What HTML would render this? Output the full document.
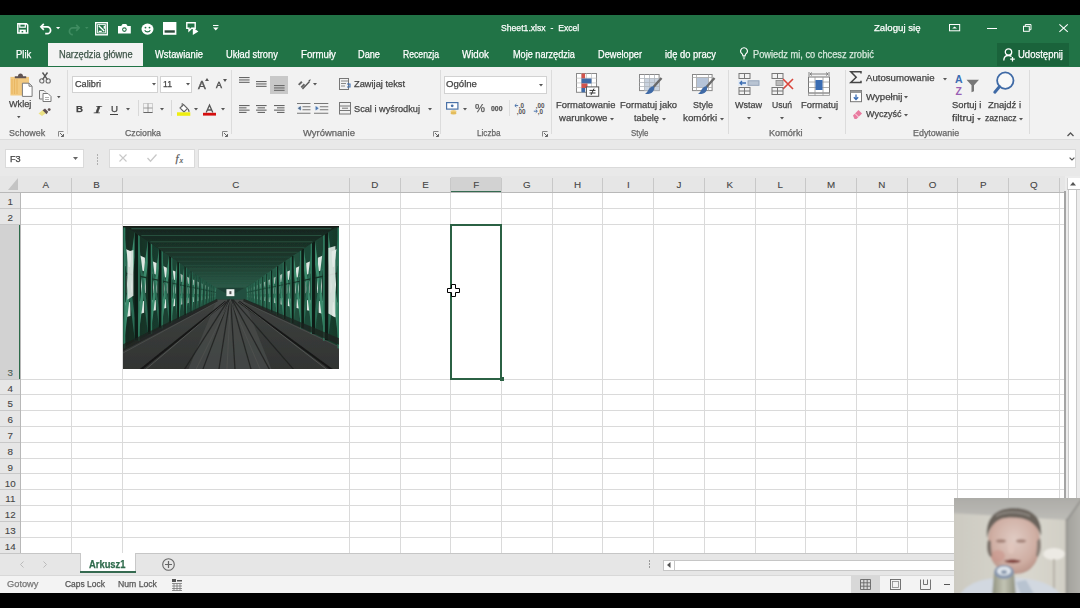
<!DOCTYPE html>
<html><head><meta charset="utf-8">
<style>
*{margin:0;padding:0;box-sizing:border-box}
html,body{width:1080px;height:608px;overflow:hidden;background:#000}
body{position:relative;font-family:"Liberation Sans",sans-serif}
.a{position:absolute;white-space:nowrap}
div.a{-webkit-text-stroke:0.25px currentColor}
svg.a{overflow:visible}
</style></head><body>
<div class="a" style="left:0.00px;top:0.00px;width:1080.00px;height:608.00px;background:#000"></div>
<div class="a" style="left:0.00px;top:15.00px;width:1080.00px;height:51.50px;background:#217346"></div>
<div class="a" style="left:0.00px;top:66.50px;width:1080.00px;height:72.50px;background:#f2f2f2"></div>
<div class="a" style="left:0.00px;top:139.00px;width:1080.00px;height:1.00px;background:#dcdcdc"></div>
<div class="a" style="left:0.00px;top:140.00px;width:1080.00px;height:36.00px;background:#e9e9e9"></div>
<svg class="a" style="left:17.00px;top:23.40px;" width="11.5" height="10.8" viewBox="0 0 11.5 10.8"><path d="M0.8 0.8h8.6l1.3 1.3v7.9H0.8z" fill="none" stroke="#fff" stroke-width="1.5"/><rect x="2.8" y="0.8" width="5.5" height="3.4" fill="none" stroke="#fff" stroke-width="1.2"/><rect x="2.6" y="6.6" width="6.2" height="3.6" fill="#fff"/><rect x="4.6" y="8" width="1.6" height="1.4" fill="#217346"/></svg>
<svg class="a" style="left:40.00px;top:23.00px;" width="12.5" height="11" viewBox="0 0 12.5 11"><path d="M3.8 0.8L0.9 3.8l2.9 3" fill="none" stroke="#fff" stroke-width="1.7"/><path d="M1.5 3.8H7.2a3.4 3.4 0 0 1 0 6.8H5.2" fill="none" stroke="#fff" stroke-width="1.7"/></svg>
<svg class="a" style="left:56.30px;top:27.00px;" width="4.2" height="2.2" viewBox="0 0 4.2 2.2"><path d="M0 0h4.2L2.1 2.2z" fill="#fff"/></svg>
<svg class="a" style="left:67.40px;top:23.90px;" width="13" height="9.5" viewBox="0 0 13 9.5"><path d="M9.2 0.8l2.9 3-2.9 3" fill="none" stroke="#3f8c61" stroke-width="1.7"/><path d="M11.5 3.8H5.8a3.4 3.4 0 0 0 0 6.8" fill="none" stroke="#3f8c61" stroke-width="1.7"/></svg>
<svg class="a" style="left:84.50px;top:27.00px;" width="3.5" height="2" viewBox="0 0 3.5 2"><path d="M0 0h3.5L1.75 2z" fill="#3f8c61"/></svg>
<svg class="a" style="left:95.20px;top:22.00px;" width="13" height="13.5" viewBox="0 0 13 13.5"><rect x="0.7" y="0.7" width="11.6" height="12.1" fill="none" stroke="#fff" stroke-width="1.4"/><rect x="2.6" y="2.6" width="7.8" height="8.3" fill="none" stroke="#fff" stroke-width="0.9"/><path d="M3.8 3.8l5.5 5.5M9.3 3.8v3M3.8 9.3h3" stroke="#fff" stroke-width="1.3"/></svg>
<svg class="a" style="left:117.80px;top:24.30px;" width="12.8" height="9.5" viewBox="0 0 12.8 9.5"><path d="M0 2h3.2l1.4-2h3.6l1.4 2h3.2v7.5H0z" fill="#fff"/><circle cx="6.4" cy="5.6" r="2.3" fill="#217346"/><circle cx="6.4" cy="5.6" r="1.2" fill="#fff"/></svg>
<svg class="a" style="left:140.60px;top:23.20px;" width="13" height="12.2" viewBox="0 0 13 12.2"><ellipse cx="6.5" cy="6.1" rx="6" ry="5.6" fill="#fff"/><circle cx="4.5" cy="4.6" r="0.9" fill="#217346"/><circle cx="8.5" cy="4.6" r="0.9" fill="#217346"/><path d="M3.7 7.2a3 2.6 0 0 0 5.6 0" fill="none" stroke="#217346" stroke-width="1.1"/></svg>
<svg class="a" style="left:163.30px;top:22.10px;" width="13.4" height="12.8" viewBox="0 0 13.4 12.8"><rect x="0" y="0" width="13.4" height="12.8" fill="#fff"/><rect x="1.6" y="8.3" width="10.2" height="2.4" fill="#2b4a3a"/></svg>
<svg class="a" style="left:186.00px;top:22.00px;" width="13" height="13" viewBox="0 0 13 13"><path d="M0.8 0.8h8.4v5.4H5.6L3 8.8V6.2H0.8z" fill="none" stroke="#fff" stroke-width="1.4"/><path d="M6.8 5.5l5.6 4-5.6 3.5z" fill="#fff"/></svg>
<svg class="a" style="left:212.80px;top:25.40px;" width="5.5" height="5.6" viewBox="0 0 5.5 5.6"><path d="M0 0.5h5.5" stroke="#fff" stroke-width="1"/><path d="M0 2.6h5.5L2.75 5.6z" fill="#fff"/></svg>
<div class="a" style="left:501.10px;top:22.70px;font-size:9.8px;line-height:9.8px;color:#ffffff;transform:scaleX(0.8820);transform-origin:0 0;">Sheet1.xlsx&nbsp; -&nbsp; Excel</div>
<div class="a" style="left:874.00px;top:22.70px;font-size:9.8px;line-height:9.8px;color:#ffffff;transform:scaleX(0.9811);transform-origin:0 0;">Zaloguj się</div>
<svg class="a" style="left:948.60px;top:24.20px;" width="11.2" height="7.3" viewBox="0 0 11.2 7.3"><rect x="0.5" y="0.5" width="10.2" height="6.3" fill="none" stroke="#fff" stroke-width="1"/><path d="M3.2 4.6l2.4-2.2 2.4 2.2z" fill="#fff"/></svg>
<div class="a" style="left:987.00px;top:27.60px;width:9.50px;height:1.10px;background:#fff"></div>
<svg class="a" style="left:1023.00px;top:24.00px;" width="8.5" height="7.8" viewBox="0 0 8.5 7.8"><rect x="0.5" y="2.3" width="5.8" height="5" fill="none" stroke="#fff" stroke-width="1"/><path d="M2.3 2.3V0.5h5.7v5.2H6.3" fill="none" stroke="#fff" stroke-width="1"/></svg>
<svg class="a" style="left:1058.60px;top:23.80px;" width="9.2" height="8.2" viewBox="0 0 9.2 8.2"><path d="M0.4 0.4l8.4 7.4M8.8 0.4L0.4 7.8" stroke="#fff" stroke-width="1.1"/></svg>
<div class="a" style="left:48.00px;top:42.80px;width:95.00px;height:23.70px;background:#f3f3f3"></div>
<div class="a" style="left:16.00px;top:50.37px;font-size:10.2px;line-height:10.2px;color:#ffffff;transform:scaleX(0.9309);transform-origin:0 0;">Plik</div>
<div class="a" style="left:59.00px;top:50.37px;font-size:10.2px;line-height:10.2px;color:#3e5548;transform:scaleX(0.9090);transform-origin:0 0;">Narzędzia główne</div>
<div class="a" style="left:155.00px;top:50.37px;font-size:10.2px;line-height:10.2px;color:#ffffff;transform:scaleX(0.9204);transform-origin:0 0;">Wstawianie</div>
<div class="a" style="left:226.00px;top:50.37px;font-size:10.2px;line-height:10.2px;color:#ffffff;transform:scaleX(0.9173);transform-origin:0 0;">Układ strony</div>
<div class="a" style="left:301.00px;top:50.37px;font-size:10.2px;line-height:10.2px;color:#ffffff;transform:scaleX(0.9501);transform-origin:0 0;">Formuły</div>
<div class="a" style="left:358.00px;top:50.37px;font-size:10.2px;line-height:10.2px;color:#ffffff;transform:scaleX(0.9022);transform-origin:0 0;">Dane</div>
<div class="a" style="left:403.00px;top:50.37px;font-size:10.2px;line-height:10.2px;color:#ffffff;transform:scaleX(0.8466);transform-origin:0 0;">Recenzja</div>
<div class="a" style="left:462.00px;top:50.37px;font-size:10.2px;line-height:10.2px;color:#ffffff;transform:scaleX(0.9527);transform-origin:0 0;">Widok</div>
<div class="a" style="left:513.00px;top:50.37px;font-size:10.2px;line-height:10.2px;color:#ffffff;transform:scaleX(0.8963);transform-origin:0 0;">Moje narzędzia</div>
<div class="a" style="left:598.00px;top:50.37px;font-size:10.2px;line-height:10.2px;color:#ffffff;transform:scaleX(0.9024);transform-origin:0 0;">Deweloper</div>
<div class="a" style="left:665.00px;top:50.37px;font-size:10.2px;line-height:10.2px;color:#ffffff;transform:scaleX(0.9178);transform-origin:0 0;">idę do pracy</div>
<svg class="a" style="left:740.00px;top:47.00px;" width="8" height="13" viewBox="0 0 8 13"><path d="M4 0.7a3.3 3.3 0 0 1 2 6c-0.6 0.5-0.8 1.2-0.8 2H2.8c0-0.8-0.2-1.5-0.8-2a3.3 3.3 0 0 1 2-6z" fill="none" stroke="#fff" stroke-width="1.1"/><path d="M2.8 10h2.4M3.2 11.8h1.6" stroke="#fff" stroke-width="1"/></svg>
<div class="a" style="left:753.00px;top:50.37px;font-size:10.2px;line-height:10.2px;color:#d6e8dc;transform:scaleX(0.9083);transform-origin:0 0;">Powiedz mi, co chcesz zrobić</div>
<div class="a" style="left:996.50px;top:42.50px;width:72.50px;height:23.00px;background:#1a633b"></div>
<svg class="a" style="left:1003.00px;top:48.00px;" width="13" height="13" viewBox="0 0 13 13"><circle cx="5.5" cy="4" r="3.2" fill="none" stroke="#fff" stroke-width="1.3"/><path d="M0.8 12.5c0-3 2-5 4.7-5 1.2 0 2.2 0.3 3 0.9" fill="none" stroke="#fff" stroke-width="1.3"/><path d="M9.5 9v4.5M7.2 11.2h4.6" stroke="#fff" stroke-width="1.2"/></svg>
<div class="a" style="left:1017.50px;top:50.37px;font-size:10.2px;line-height:10.2px;color:#ffffff;transform:scaleX(0.9337);transform-origin:0 0;">Udostępnij</div>
<div class="a" style="left:67.30px;top:70.00px;width:1.00px;height:64.00px;background:#dcdcdc"></div>
<div class="a" style="left:230.80px;top:70.00px;width:1.00px;height:64.00px;background:#dcdcdc"></div>
<div class="a" style="left:440.00px;top:70.00px;width:1.00px;height:64.00px;background:#dcdcdc"></div>
<div class="a" style="left:550.50px;top:70.00px;width:1.00px;height:64.00px;background:#dcdcdc"></div>
<div class="a" style="left:728.20px;top:70.00px;width:1.00px;height:64.00px;background:#dcdcdc"></div>
<div class="a" style="left:845.00px;top:70.00px;width:1.00px;height:64.00px;background:#dcdcdc"></div>
<div class="a" style="left:1028.80px;top:70.00px;width:1.00px;height:64.00px;background:#dcdcdc"></div>
<div class="a" style="left:8.80px;top:128.65px;font-size:8.8px;line-height:8.8px;color:#666666;transform:scaleX(1.0110);transform-origin:0 0;">Schowek</div>
<div class="a" style="left:125.00px;top:128.65px;font-size:8.8px;line-height:8.8px;color:#666666;transform:scaleX(0.9947);transform-origin:0 0;">Czcionka</div>
<div class="a" style="left:303.00px;top:128.65px;font-size:8.8px;line-height:8.8px;color:#666666;transform:scaleX(1.0757);transform-origin:0 0;">Wyrównanie</div>
<div class="a" style="left:476.80px;top:128.65px;font-size:8.8px;line-height:8.8px;color:#666666;transform:scaleX(0.9277);transform-origin:0 0;">Liczba</div>
<div class="a" style="left:630.80px;top:128.65px;font-size:8.8px;line-height:8.8px;color:#666666;transform:scaleX(0.8945);transform-origin:0 0;">Style</div>
<div class="a" style="left:769.40px;top:128.65px;font-size:8.8px;line-height:8.8px;color:#666666;transform:scaleX(1.0379);transform-origin:0 0;">Komórki</div>
<div class="a" style="left:913.30px;top:128.65px;font-size:8.8px;line-height:8.8px;color:#666666;transform:scaleX(1.0133);transform-origin:0 0;">Edytowanie</div>
<svg class="a" style="left:58.30px;top:130.80px;" width="6" height="6" viewBox="0 0 6 6"><path d="M0.5 5.5V0.5h5" fill="none" stroke="#888" stroke-width="1"/><path d="M2 2l3.5 3.5M5.5 3v2.5H3" fill="none" stroke="#666" stroke-width="1"/></svg>
<svg class="a" style="left:222.00px;top:130.80px;" width="6" height="6" viewBox="0 0 6 6"><path d="M0.5 5.5V0.5h5" fill="none" stroke="#888" stroke-width="1"/><path d="M2 2l3.5 3.5M5.5 3v2.5H3" fill="none" stroke="#666" stroke-width="1"/></svg>
<svg class="a" style="left:432.50px;top:130.80px;" width="6" height="6" viewBox="0 0 6 6"><path d="M0.5 5.5V0.5h5" fill="none" stroke="#888" stroke-width="1"/><path d="M2 2l3.5 3.5M5.5 3v2.5H3" fill="none" stroke="#666" stroke-width="1"/></svg>
<svg class="a" style="left:542.00px;top:130.80px;" width="6" height="6" viewBox="0 0 6 6"><path d="M0.5 5.5V0.5h5" fill="none" stroke="#888" stroke-width="1"/><path d="M2 2l3.5 3.5M5.5 3v2.5H3" fill="none" stroke="#666" stroke-width="1"/></svg>
<svg class="a" style="left:9.50px;top:72.50px;" width="23" height="24.5" viewBox="0 0 23 24.5"><rect x="0.4" y="3.9" width="18.6" height="18.6" fill="#f2c97f"/><path d="M2 6v15M4.5 6v15M7 6v15" stroke="#e9b763" stroke-width="1.2"/><path d="M4.8 5.3V3.2h3.2c0-1.8 1-2.8 2.5-2.8s2.5 1 2.5 2.8h3.2v2.1z" fill="#5f5353"/><path d="M12.4 10.2h6.7l3 3v10.2h-9.7z" fill="#fff" stroke="#7a7a7a" stroke-width="1"/><path d="M19 10.2v3h3" fill="none" stroke="#7a7a7a" stroke-width="1"/></svg>
<div class="a" style="left:8.70px;top:100.41px;font-size:9.2px;line-height:9.2px;color:#444444;transform:scaleX(0.9916);transform-origin:0 0;">Wklej</div>
<svg class="a" style="left:17.30px;top:116.00px;" width="3.6" height="2.2" viewBox="0 0 3.6 2.2"><path d="M0 0h3.6L1.8 2.2z" fill="#555"/></svg>
<svg class="a" style="left:39.20px;top:72.00px;" width="12" height="11.5" viewBox="0 0 12 11.5"><path d="M3.5 0.5l5 7.2M8.5 0.5l-5 7.2" stroke="#555" stroke-width="1.4"/><circle cx="2.8" cy="8.9" r="2.1" fill="none" stroke="#6a6a6a" stroke-width="1.1"/><circle cx="9.2" cy="8.9" r="2.1" fill="none" stroke="#6a6a6a" stroke-width="1.1"/></svg>
<svg class="a" style="left:38.70px;top:89.70px;" width="12.5" height="12" viewBox="0 0 12.5 12"><path d="M0.5 0.5h4.5l2 2M0.5 0.5v8.5h3" fill="none" stroke="#777" stroke-width="1"/><path d="M4 3.5h5l3 3v5h-8z" fill="#fff" stroke="#777" stroke-width="1"/><path d="M6 7.5h4M6 9.5h4" stroke="#999" stroke-width="0.8"/></svg>
<svg class="a" style="left:56.80px;top:95.60px;" width="3.6" height="2.2" viewBox="0 0 3.6 2.2"><path d="M0 0h3.6L1.8 2.2z" fill="#555"/></svg>
<svg class="a" style="left:38.30px;top:108.40px;" width="13" height="8.2" viewBox="0 0 13 8.2"><path d="M0.5 5.5L5 1.8l3.2 3.2L4 8z" fill="#ece286"/><path d="M4.6 2.2l2.4-1.6 3.2 3.2-1.6 2.4z" fill="#5f5050"/><circle cx="11.2" cy="1.6" r="1.4" fill="#5f5050"/></svg>
<div class="a" style="left:71.70px;top:76.00px;width:86.60px;height:17.00px;background:#fff;border:1px solid #d2d2d2"></div>
<div class="a" style="left:74.50px;top:80.21px;font-size:9.2px;line-height:9.2px;color:#444444;transform:scaleX(0.9972);transform-origin:0 0;">Calibri</div>
<svg class="a" style="left:151.50px;top:83.30px;" width="4" height="2.5" viewBox="0 0 4 2.5"><path d="M0 0h4L2 2.5z" fill="#555"/></svg>
<div class="a" style="left:159.70px;top:76.00px;width:32.80px;height:17.00px;background:#fff;border:1px solid #d2d2d2"></div>
<div class="a" style="left:162.50px;top:80.21px;font-size:9.2px;line-height:9.2px;color:#444444;transform:scaleX(0.9423);transform-origin:0 0;">11</div>
<svg class="a" style="left:185.50px;top:83.30px;" width="4" height="2.5" viewBox="0 0 4 2.5"><path d="M0 0h4L2 2.5z" fill="#555"/></svg>
<div class="a" style="left:198.20px;top:79.51px;font-size:10.5px;line-height:10.5px;color:#555;transform:scaleX(1.1137);transform-origin:0 0;-webkit-text-stroke:0.4px currentColor">A</div>
<svg class="a" style="left:205.00px;top:78.00px;" width="4" height="3" viewBox="0 0 4 3"><path d="M0 3l2-3 2 3z" fill="#555"/></svg>
<div class="a" style="left:216.40px;top:81.20px;font-size:8.5px;line-height:8.5px;color:#555;transform:scaleX(1.0406);transform-origin:0 0;-webkit-text-stroke:0.5px currentColor">A</div>
<svg class="a" style="left:223.00px;top:79.00px;" width="4" height="3" viewBox="0 0 4 3"><path d="M0 0h4L2 3z" fill="#555"/></svg>
<div class="a" style="left:75.50px;top:104.46px;font-size:9.5px;line-height:9.5px;color:#444;font-weight:bold;transform:scaleX(1.0203);transform-origin:0 0;">B</div>
<div class="a" style="left:93.50px;top:103.61px;font-size:10.5px;line-height:10.5px;color:#444;transform:scaleX(2.0569);transform-origin:0 0;"><i style="font-family:Liberation Serif">I</i></div>
<div class="a" style="left:110.50px;top:104.46px;font-size:9.5px;line-height:9.5px;color:#444;transform:scaleX(1.0203);transform-origin:0 0;">U</div>
<div class="a" style="left:110.30px;top:114.00px;width:7.50px;height:1.00px;background:#444"></div>
<svg class="a" style="left:125.50px;top:108.00px;" width="4" height="2.5" viewBox="0 0 4 2.5"><path d="M0 0h4L2 2.5z" fill="#555"/></svg>
<div class="a" style="left:137.50px;top:100.00px;width:1.00px;height:16.00px;background:#d8d8d8"></div>
<svg class="a" style="left:142.50px;top:103.00px;" width="10" height="10" viewBox="0 0 10 10"><rect x="0.5" y="0.5" width="9" height="9" fill="none" stroke="#aaa" stroke-width="1" stroke-dasharray="1 1"/><path d="M5 0.5v9M0.5 5h9" stroke="#888" stroke-width="0.8"/><path d="M0.5 9.5h9" stroke="#666" stroke-width="1"/></svg>
<svg class="a" style="left:159.50px;top:108.00px;" width="4" height="2.5" viewBox="0 0 4 2.5"><path d="M0 0h4L2 2.5z" fill="#555"/></svg>
<div class="a" style="left:170.50px;top:100.00px;width:1.00px;height:16.00px;background:#d8d8d8"></div>
<svg class="a" style="left:176.50px;top:101.50px;" width="13.5" height="14" viewBox="0 0 13.5 14"><path d="M3 6L6.5 2.5l4 4-3.5 3.5z" fill="#fff" stroke="#666" stroke-width="1.1"/><path d="M5.2 1v3.5" stroke="#666" stroke-width="1"/><path d="M11 7c1 1.5 1.2 2.3 0.6 2.8" fill="none" stroke="#555" stroke-width="1.3"/><rect x="0" y="10.3" width="13.3" height="3.5" fill="#eeee10"/></svg>
<svg class="a" style="left:193.50px;top:108.00px;" width="4" height="2.5" viewBox="0 0 4 2.5"><path d="M0 0h4L2 2.5z" fill="#555"/></svg>
<svg class="a" style="left:203.30px;top:103.50px;" width="13" height="12" viewBox="0 0 13 12"><path d="M3.2 8.5L6.5 1l3.3 7.5M4.4 6h4.2" fill="none" stroke="#555" stroke-width="1.3"/><rect x="0" y="8.8" width="13" height="2.8" fill="#d50f0f"/></svg>
<svg class="a" style="left:220.50px;top:108.00px;" width="4" height="2.5" viewBox="0 0 4 2.5"><path d="M0 0h4L2 2.5z" fill="#555"/></svg>
<svg class="a" style="left:238.70px;top:77.10px;" width="12" height="8.2" viewBox="0 0 12 8.2"><rect x="0" y="0.00" width="10.6" height="1.1" fill="#666"/><rect x="0" y="2.40" width="10.6" height="1.1" fill="#666"/><rect x="0" y="4.80" width="10.6" height="1.1" fill="#666"/></svg>
<svg class="a" style="left:256.00px;top:80.70px;" width="12" height="8.2" viewBox="0 0 12 8.2"><rect x="0" y="0.00" width="10.6" height="1.1" fill="#666"/><rect x="0" y="2.40" width="10.6" height="1.1" fill="#666"/><rect x="0" y="4.80" width="10.6" height="1.1" fill="#666"/></svg>
<div class="a" style="left:270.00px;top:75.60px;width:17.80px;height:18.00px;background:#c8c8c8"></div>
<svg class="a" style="left:273.50px;top:84.50px;" width="12" height="8.2" viewBox="0 0 12 8.2"><rect x="0" y="0.00" width="10.6" height="1.1" fill="#6a6a6a"/><rect x="0" y="2.40" width="10.6" height="1.1" fill="#6a6a6a"/><rect x="0" y="4.80" width="10.6" height="1.1" fill="#6a6a6a"/></svg>
<svg class="a" style="left:238.70px;top:104.60px;" width="12" height="10.2" viewBox="0 0 12 10.2"><rect x="0" y="0.00" width="10.6" height="1.1" fill="#666"/><rect x="0" y="2.30" width="7.5" height="1.1" fill="#666"/><rect x="0" y="4.60" width="10.6" height="1.1" fill="#666"/><rect x="0" y="6.90" width="7.5" height="1.1" fill="#666"/></svg>
<svg class="a" style="left:256.00px;top:104.60px;" width="12" height="10.2" viewBox="0 0 12 10.2"><rect x="0" y="0.00" width="10.6" height="1.1" fill="#666"/><rect x="1.5" y="2.30" width="7.5" height="1.1" fill="#666"/><rect x="0" y="4.60" width="10.6" height="1.1" fill="#666"/><rect x="1.5" y="6.90" width="7.5" height="1.1" fill="#666"/></svg>
<svg class="a" style="left:273.50px;top:104.60px;" width="12" height="10.2" viewBox="0 0 12 10.2"><rect x="0" y="0.00" width="10.6" height="1.1" fill="#666"/><rect x="3" y="2.30" width="7.5" height="1.1" fill="#666"/><rect x="0" y="4.60" width="10.6" height="1.1" fill="#666"/><rect x="3" y="6.90" width="7.5" height="1.1" fill="#666"/></svg>
<svg class="a" style="left:296.70px;top:78.50px;" width="14" height="10.5" viewBox="0 0 14 10.5"><path d="M1 5.2l3.2-3.2 1.4 1.4-3.2 3.2z M3.6 7.8l3.2-3.2 1.4 1.4-3.2 3.2z" fill="#666"/><path d="M5.5 10L12.5 2.5" stroke="#555" stroke-width="1.3"/><path d="M11.3 1.2l2.5-1-1 2.5z" fill="#555"/></svg>
<svg class="a" style="left:313.00px;top:83.00px;" width="4" height="2.5" viewBox="0 0 4 2.5"><path d="M0 0h4L2 2.5z" fill="#555"/></svg>
<svg class="a" style="left:296.70px;top:103.10px;" width="13.5" height="10.7" viewBox="0 0 13.5 10.7"><path d="M0 0.5h13.5M5.5 3.8h8M5.5 6.8h8M0 10.2h13.5" stroke="#777" stroke-width="1.1"/><circle cx="2.6" cy="5.3" r="2.2" fill="#dde6f0"/><path d="M0.8 5.3l3-2.2v4.4z" fill="#4d6a8f"/></svg>
<svg class="a" style="left:313.50px;top:103.10px;" width="14.3" height="10.7" viewBox="0 0 14.3 10.7"><path d="M0 0.5h14.3M5.8 3.8h8.5M5.8 6.8h8.5M0 10.2h14.3" stroke="#777" stroke-width="1.1"/><circle cx="2.8" cy="5.3" r="2.2" fill="#dde6f0"/><path d="M4.6 5.3l-3-2.2v4.4z" fill="#4d78b0"/></svg>
<svg class="a" style="left:338.70px;top:77.80px;" width="12" height="12.5" viewBox="0 0 12 12.5"><rect x="0.5" y="0.5" width="9" height="11" fill="none" stroke="#777" stroke-width="1"/><path d="M2 3h7M2 5.5h5M2 8h4" stroke="#888" stroke-width="1"/><path d="M8 6h3v3H8" fill="none" stroke="#3b6db3" stroke-width="1.1"/></svg>
<div class="a" style="left:353.90px;top:80.01px;font-size:9.2px;line-height:9.2px;color:#444444;transform:scaleX(1.0096);transform-origin:0 0;">Zawijaj tekst</div>
<svg class="a" style="left:338.70px;top:102.00px;" width="12" height="12.5" viewBox="0 0 12 12.5"><rect x="0.5" y="0.5" width="11" height="11.5" fill="none" stroke="#777" stroke-width="1"/><path d="M0.5 4h11M0.5 8.5h11M3 6.2h6" stroke="#777" stroke-width="1"/></svg>
<div class="a" style="left:353.90px;top:105.01px;font-size:9.2px;line-height:9.2px;color:#444444;transform:scaleX(1.0022);transform-origin:0 0;">Scal i wyśrodkuj</div>
<svg class="a" style="left:428.00px;top:108.00px;" width="4" height="2.5" viewBox="0 0 4 2.5"><path d="M0 0h4L2 2.5z" fill="#555"/></svg>
<div class="a" style="left:443.50px;top:75.80px;width:103.50px;height:17.80px;background:#fff;border:1px solid #d2d2d2"></div>
<div class="a" style="left:445.80px;top:80.01px;font-size:9.2px;line-height:9.2px;color:#444444;transform:scaleX(1.0449);transform-origin:0 0;">Ogólne</div>
<svg class="a" style="left:539.30px;top:83.50px;" width="4" height="2.5" viewBox="0 0 4 2.5"><path d="M0 0h4L2 2.5z" fill="#555"/></svg>
<svg class="a" style="left:445.50px;top:101.70px;" width="12.5" height="12.6" viewBox="0 0 12.5 12.6"><rect x="0.6" y="0.6" width="11.3" height="6.5" fill="#fff" stroke="#4a72a8" stroke-width="1.2"/><circle cx="6.2" cy="3.8" r="1.4" fill="#4a72a8"/><ellipse cx="7.5" cy="9.6" rx="3" ry="1.6" fill="#f0cf7a"/><ellipse cx="7.5" cy="11.2" rx="3" ry="1.4" fill="#e3bc5c"/></svg>
<svg class="a" style="left:463.00px;top:108.00px;" width="4" height="2.5" viewBox="0 0 4 2.5"><path d="M0 0h4L2 2.5z" fill="#555"/></svg>
<div class="a" style="left:474.50px;top:103.47px;font-size:11.5px;line-height:11.5px;color:#555;transform:scaleX(0.9780);transform-origin:0 0;">%</div>
<div class="a" style="left:490.70px;top:104.97px;font-size:7.6px;line-height:7.6px;color:#555;font-weight:bold;transform:scaleX(0.9069);transform-origin:0 0;">000</div>
<div class="a" style="left:509.00px;top:100.00px;width:1.00px;height:16.00px;background:#dedede"></div>
<svg class="a" style="left:514.30px;top:102.80px;" width="12.5" height="10.8" viewBox="0 0 12.5 10.8"><path d="M1 2.6h3.2M2.4 1.1L0.8 2.6l1.6 1.5" stroke="#4a72a8" stroke-width="1" fill="none"/><text x="4.8" y="5.3" font-size="6.3" fill="#555" font-family="Liberation Sans" font-weight="bold">,0</text><text x="2.8" y="10.6" font-size="6.3" fill="#555" font-family="Liberation Sans" font-weight="bold">,00</text></svg>
<svg class="a" style="left:532.70px;top:102.80px;" width="12" height="10.8" viewBox="0 0 12 10.8"><text x="2.8" y="5.3" font-size="6.3" fill="#555" font-family="Liberation Sans" font-weight="bold">,00</text><path d="M0.8 8.2h3.2M2.8 6.7l1.6 1.5-1.6 1.5" stroke="#4a72a8" stroke-width="1" fill="none"/><text x="4.8" y="10.6" font-size="6.3" fill="#555" font-family="Liberation Sans" font-weight="bold">,0</text></svg>
<svg class="a" style="left:575.60px;top:72.80px;" width="23" height="23.6" viewBox="0 0 23 23.6"><rect x="0.5" y="0.5" width="20" height="18.8" fill="#fff" stroke="#8a8a8a" stroke-width="1"/><path d="M0.5 5.2h20M0.5 9.9h20M0.5 14.6h20M5.5 0.5v18.8M10.5 0.5v18.8M15.5 0.5v18.8" stroke="#c4c4c4" stroke-width="0.8"/><rect x="5.5" y="0.5" width="3.6" height="5" fill="#d2534c"/><rect x="5.5" y="5.5" width="10" height="5" fill="#3f6aa6"/><rect x="5.5" y="10.5" width="6" height="4.5" fill="#d2534c"/><rect x="5.5" y="15" width="3.6" height="4.3" fill="#3f6aa6"/><rect x="10.4" y="13.9" width="12.3" height="9.4" fill="#fff" stroke="#555" stroke-width="1"/><path d="M13.5 17.4h6M13.5 20h6M18 15.6l-3 6.4" stroke="#333" stroke-width="1"/></svg>
<div class="a" style="left:556.30px;top:101.01px;font-size:9.2px;line-height:9.2px;color:#444444;transform:scaleX(1.0207);transform-origin:0 0;">Formatowanie</div>
<div class="a" style="left:559.00px;top:113.51px;font-size:9.2px;line-height:9.2px;color:#444444;transform:scaleX(1.0422);transform-origin:0 0;">warunkowe</div>
<svg class="a" style="left:610.00px;top:117.50px;" width="4" height="2.5" viewBox="0 0 4 2.5"><path d="M0 0h4L2 2.5z" fill="#555"/></svg>
<svg class="a" style="left:638.70px;top:74.20px;" width="24" height="23" viewBox="0 0 24 23"><rect x="0.5" y="0.5" width="19.6" height="16.1" fill="#fff" stroke="#888" stroke-width="1"/><rect x="5.5" y="4.5" width="14.6" height="12" fill="#c9d3df"/><path d="M0.5 4.5h19.6M0.5 8.5h19.6M0.5 12.5h19.6M5.5 0.5v16M10.5 0.5v16M15.5 0.5v16" stroke="#b0b6bd" stroke-width="0.8"/><path d="M22.5 4l-8 9" stroke="#6a6a6a" stroke-width="2.4"/><path d="M14.8 12.2c-1.8-0.4-4 1-5.2 3.2-0.8 1.6-2 3.4-3.6 4.6 3.2 0.4 6.4-0.6 8-2.6 1.2-1.6 1.6-3.6 0.8-5.2z" fill="#3f6aa6"/></svg>
<div class="a" style="left:620.30px;top:101.01px;font-size:9.2px;line-height:9.2px;color:#444444;transform:scaleX(1.0263);transform-origin:0 0;">Formatuj jako</div>
<div class="a" style="left:634.00px;top:113.51px;font-size:9.2px;line-height:9.2px;color:#444444;transform:scaleX(0.9973);transform-origin:0 0;">tabelę</div>
<svg class="a" style="left:661.50px;top:117.50px;" width="4" height="2.5" viewBox="0 0 4 2.5"><path d="M0 0h4L2 2.5z" fill="#555"/></svg>
<svg class="a" style="left:692.20px;top:74.20px;" width="24" height="23" viewBox="0 0 24 23"><rect x="0.5" y="0.5" width="19.6" height="16.1" fill="#fff" stroke="#888" stroke-width="1"/><rect x="4.5" y="3.5" width="12" height="10" fill="#b6c4d8"/><path d="M0.5 3.5h19.6M0.5 13.5h19.6M4.5 0.5v16M16.5 0.5v16" stroke="#a8a8a8" stroke-width="0.8"/><path d="M22.5 4l-8 9" stroke="#6a6a6a" stroke-width="2.4"/><path d="M14.8 12.2c-1.8-0.4-4 1-5.2 3.2-0.8 1.6-2 3.4-3.6 4.6 3.2 0.4 6.4-0.6 8-2.6 1.2-1.6 1.6-3.6 0.8-5.2z" fill="#3f6aa6"/></svg>
<div class="a" style="left:692.50px;top:101.01px;font-size:9.2px;line-height:9.2px;color:#444444;transform:scaleX(0.9778);transform-origin:0 0;">Style</div>
<div class="a" style="left:682.50px;top:113.51px;font-size:9.2px;line-height:9.2px;color:#444444;transform:scaleX(1.0619);transform-origin:0 0;">komórki</div>
<svg class="a" style="left:719.50px;top:117.50px;" width="4" height="2.5" viewBox="0 0 4 2.5"><path d="M0 0h4L2 2.5z" fill="#555"/></svg>
<svg class="a" style="left:738.40px;top:72.70px;" width="22" height="22" viewBox="0 0 22 22"><rect x="1" y="0.5" width="11" height="5" fill="none" stroke="#777" stroke-width="1"/><path d="M6.5 0.5v5" stroke="#777" stroke-width="1"/><rect x="0" y="7" width="22" height="6" fill="#e3ebf5"/><rect x="10" y="7.8" width="11" height="4.5" fill="#b8c4d3" stroke="#8c9bb0" stroke-width="0.8"/><path d="M8 10H2M4 8l-2 2 2 2" stroke="#3b6db3" stroke-width="1.3" fill="none"/><rect x="1" y="14.5" width="11" height="7" fill="none" stroke="#777" stroke-width="1"/><path d="M6.5 14.5v7M1 18h11" stroke="#777" stroke-width="1"/></svg>
<div class="a" style="left:735.30px;top:100.81px;font-size:9.2px;line-height:9.2px;color:#444444;transform:scaleX(0.9855);transform-origin:0 0;">Wstaw</div>
<svg class="a" style="left:746.70px;top:116.50px;" width="4" height="2.5" viewBox="0 0 4 2.5"><path d="M0 0h4L2 2.5z" fill="#555"/></svg>
<svg class="a" style="left:771.00px;top:72.70px;" width="24" height="22" viewBox="0 0 24 22"><rect x="1" y="0.5" width="11" height="5" fill="none" stroke="#777" stroke-width="1"/><path d="M6.5 0.5v5" stroke="#777" stroke-width="1"/><rect x="5" y="7.5" width="7" height="5" fill="#bbb" stroke="#888" stroke-width="0.8"/><path d="M12 6l10 10M22 6L12 16" stroke="#d9453b" stroke-width="1.6"/><rect x="1" y="14.5" width="11" height="7" fill="none" stroke="#777" stroke-width="1"/><path d="M6.5 14.5v7M1 18h11" stroke="#777" stroke-width="1"/></svg>
<div class="a" style="left:771.90px;top:100.81px;font-size:9.2px;line-height:9.2px;color:#444444;transform:scaleX(0.9359);transform-origin:0 0;">Usuń</div>
<svg class="a" style="left:779.60px;top:116.50px;" width="4" height="2.5" viewBox="0 0 4 2.5"><path d="M0 0h4L2 2.5z" fill="#555"/></svg>
<svg class="a" style="left:808.40px;top:72.00px;" width="22" height="24" viewBox="0 0 22 24"><path d="M2 2h18M2 2l2-1.5M2 2l2 1.5M20 2l-2-1.5M20 2l-2 1.5M1 0v4M21 0v4" stroke="#777" stroke-width="0.9" fill="none"/><rect x="0.5" y="5" width="21" height="16" fill="#fff" stroke="#777" stroke-width="1"/><path d="M0.5 10h21M0.5 15.5h21M7 5v19M15 5v19" stroke="#999" stroke-width="0.8"/><rect x="7.5" y="8" width="7" height="10" fill="#3b6db3"/><rect x="0.5" y="21" width="21" height="2.5" fill="none" stroke="#999" stroke-width="0.8"/></svg>
<div class="a" style="left:801.00px;top:100.81px;font-size:9.2px;line-height:9.2px;color:#444444;transform:scaleX(1.0248);transform-origin:0 0;">Formatuj</div>
<svg class="a" style="left:818.00px;top:116.50px;" width="4" height="2.5" viewBox="0 0 4 2.5"><path d="M0 0h4L2 2.5z" fill="#555"/></svg>
<svg class="a" style="left:850.30px;top:71.30px;" width="12" height="12.3" viewBox="0 0 12 12.3"><path d="M11 2.5V0.8H0.8L6.2 6.2 0.8 11.5H11V9.8" fill="none" stroke="#444" stroke-width="1.5"/></svg>
<div class="a" style="left:865.80px;top:74.01px;font-size:9.2px;line-height:9.2px;color:#444444;transform:scaleX(1.0479);transform-origin:0 0;">Autosumowanie</div>
<svg class="a" style="left:942.50px;top:77.50px;" width="4" height="2.5" viewBox="0 0 4 2.5"><path d="M0 0h4L2 2.5z" fill="#555"/></svg>
<svg class="a" style="left:850.30px;top:89.80px;" width="12" height="12.2" viewBox="0 0 12 12.2"><rect x="0.5" y="0.5" width="11" height="11.2" fill="#fff" stroke="#777" stroke-width="1"/><rect x="0.5" y="0.5" width="11" height="2.5" fill="#999"/><path d="M6 4.5v5M3.8 7.3L6 9.5l2.2-2.2" stroke="#3b6db3" stroke-width="1.3" fill="none"/></svg>
<div class="a" style="left:865.80px;top:92.51px;font-size:9.2px;line-height:9.2px;color:#444444;transform:scaleX(1.0494);transform-origin:0 0;">Wypełnij</div>
<svg class="a" style="left:904.20px;top:96.00px;" width="4" height="2.5" viewBox="0 0 4 2.5"><path d="M0 0h4L2 2.5z" fill="#555"/></svg>
<svg class="a" style="left:851.50px;top:109.00px;" width="10.5" height="10" viewBox="0 0 10.5 10"><path d="M1 6.5L6.5 1l3.5 3.5L4.5 10H2.5z" fill="#e97ba0"/><path d="M3 4.5l3.5 3.5" stroke="#fff" stroke-width="0.8"/></svg>
<div class="a" style="left:865.80px;top:110.11px;font-size:9.2px;line-height:9.2px;color:#444444;transform:scaleX(0.9806);transform-origin:0 0;">Wyczyść</div>
<svg class="a" style="left:904.00px;top:113.50px;" width="4" height="2.5" viewBox="0 0 4 2.5"><path d="M0 0h4L2 2.5z" fill="#555"/></svg>
<svg class="a" style="left:954.50px;top:74.50px;" width="25" height="20" viewBox="0 0 25 20"><text x="0" y="8.3" font-size="10.5" fill="#3b6db3" font-family="Liberation Sans" font-weight="bold">A</text><text x="0.5" y="19.5" font-size="10.5" fill="#9a5fb4" font-family="Liberation Sans" font-weight="bold">Z</text><path d="M11.5 4.8h12.5l-5 5.5v6l-2.5 1v-7z" fill="#777"/></svg>
<div class="a" style="left:952.00px;top:101.31px;font-size:9.2px;line-height:9.2px;color:#444444;transform:scaleX(1.0232);transform-origin:0 0;">Sortuj i</div>
<div class="a" style="left:952.00px;top:113.61px;font-size:9.2px;line-height:9.2px;color:#444444;transform:scaleX(1.1480);transform-origin:0 0;">filtruj</div>
<svg class="a" style="left:977.00px;top:117.50px;" width="4" height="2.5" viewBox="0 0 4 2.5"><path d="M0 0h4L2 2.5z" fill="#555"/></svg>
<svg class="a" style="left:993.00px;top:71.00px;" width="24" height="24" viewBox="0 0 24 24"><circle cx="12.3" cy="9.6" r="8.2" fill="#f8f8f8" stroke="#3f6aa6" stroke-width="1.8"/><path d="M6.6 15.6L1.8 21.2" stroke="#3f6aa6" stroke-width="3" stroke-linecap="round"/></svg>
<div class="a" style="left:987.90px;top:101.31px;font-size:9.2px;line-height:9.2px;color:#444444;transform:scaleX(1.0275);transform-origin:0 0;">Znajdź i</div>
<div class="a" style="left:984.90px;top:113.61px;font-size:9.2px;line-height:9.2px;color:#444444;transform:scaleX(0.9363);transform-origin:0 0;">zaznacz</div>
<svg class="a" style="left:1019.00px;top:117.50px;" width="4" height="2.5" viewBox="0 0 4 2.5"><path d="M0 0h4L2 2.5z" fill="#555"/></svg>
<svg class="a" style="left:1066.50px;top:132.00px;" width="7" height="4.5" viewBox="0 0 7 4.5"><path d="M0.5 4l3-3 3 3" fill="none" stroke="#555" stroke-width="1.3"/></svg>
<div class="a" style="left:4.90px;top:149.40px;width:79.10px;height:18.90px;background:#fff;border:1px solid #dadada"></div>
<div class="a" style="left:9.70px;top:154.91px;font-size:9.2px;line-height:9.2px;color:#444;transform:scaleX(0.9966);transform-origin:0 0;">F3</div>
<svg class="a" style="left:73.00px;top:157.00px;" width="5" height="3" viewBox="0 0 5 3"><path d="M0 0h5L2.5 3z" fill="#666"/></svg>
<div class="a" style="left:96.50px;top:154.00px;width:1.00px;height:1.50px;background:#b0b0b0"></div>
<div class="a" style="left:96.50px;top:157.00px;width:1.00px;height:1.50px;background:#b0b0b0"></div>
<div class="a" style="left:96.50px;top:160.00px;width:1.00px;height:1.50px;background:#b0b0b0"></div>
<div class="a" style="left:96.50px;top:163.00px;width:1.00px;height:1.50px;background:#b0b0b0"></div>
<div class="a" style="left:108.50px;top:149.40px;width:86.30px;height:18.90px;background:#fff;border:1px solid #dadada"></div>
<svg class="a" style="left:119.00px;top:154.00px;" width="8" height="8" viewBox="0 0 8 8"><path d="M0.5 0.5l7 7M7.5 0.5l-7 7" stroke="#c8c8c8" stroke-width="1.1"/></svg>
<svg class="a" style="left:147.00px;top:154.00px;" width="10" height="8" viewBox="0 0 10 8"><path d="M0.5 4l3 3.2L9.5 0.5" fill="none" stroke="#c8c8c8" stroke-width="1.3"/></svg>
<svg class="a" style="left:175.00px;top:152.00px;" width="12" height="12" viewBox="0 0 12 12"><text x="0.5" y="10" font-size="11" font-style="italic" font-family="Liberation Serif" fill="#5a5a5a" stroke="#5a5a5a" stroke-width="0.25">f</text><text x="4.6" y="10.6" font-size="8" font-style="italic" font-family="Liberation Serif" fill="#5a5a5a" stroke="#5a5a5a" stroke-width="0.2">x</text></svg>
<div class="a" style="left:198.40px;top:149.40px;width:878.00px;height:18.90px;background:#fff;border:1px solid #dadada"></div>
<svg class="a" style="left:1069.00px;top:156.50px;" width="6" height="4" viewBox="0 0 6 4"><path d="M0.6 0.6l2.4 2.4 2.4-2.4" fill="none" stroke="#555" stroke-width="1.1"/></svg>
<div class="a" style="left:0.00px;top:175.50px;width:1065.20px;height:16.90px;background:#e6e6e6"></div>
<div class="a" style="left:0.00px;top:192.40px;width:20.00px;height:360.60px;background:#e6e6e6"></div>
<div class="a" style="left:20.00px;top:192.40px;width:1045.20px;height:360.60px;background:#fff"></div>
<svg class="a" style="left:7.50px;top:177.80px;" width="10" height="12" viewBox="0 0 10 12"><path d="M10 0v12H0z" fill="#c4c4c4"/></svg>
<div class="a" style="left:450.80px;top:176.50px;width:50.70px;height:15.90px;background:#d2d2d2"></div>
<div class="a" style="left:450.80px;top:190.80px;width:50.70px;height:1.80px;background:#356a50"></div>
<div class="a" style="left:0.00px;top:224.06px;width:20.00px;height:154.94px;background:#d2d2d2"></div>
<div class="a" style="left:18.50px;top:224.06px;width:2.00px;height:154.94px;background:#2d6a4a"></div>
<div class="a" style="left:70.50px;top:192.40px;width:1.00px;height:360.60px;background:#dadada"></div>
<div class="a" style="left:70.50px;top:177.50px;width:1.00px;height:14.90px;background:#c8c8c8"></div>
<div class="a" style="left:121.50px;top:192.40px;width:1.00px;height:360.60px;background:#dadada"></div>
<div class="a" style="left:121.50px;top:177.50px;width:1.00px;height:14.90px;background:#c8c8c8"></div>
<div class="a" style="left:348.90px;top:192.40px;width:1.00px;height:360.60px;background:#dadada"></div>
<div class="a" style="left:348.90px;top:177.50px;width:1.00px;height:14.90px;background:#c8c8c8"></div>
<div class="a" style="left:399.60px;top:192.40px;width:1.00px;height:360.60px;background:#dadada"></div>
<div class="a" style="left:399.60px;top:177.50px;width:1.00px;height:14.90px;background:#c8c8c8"></div>
<div class="a" style="left:450.30px;top:192.40px;width:1.00px;height:360.60px;background:#dadada"></div>
<div class="a" style="left:450.30px;top:177.50px;width:1.00px;height:14.90px;background:#c8c8c8"></div>
<div class="a" style="left:501.00px;top:192.40px;width:1.00px;height:360.60px;background:#dadada"></div>
<div class="a" style="left:501.00px;top:177.50px;width:1.00px;height:14.90px;background:#c8c8c8"></div>
<div class="a" style="left:551.70px;top:192.40px;width:1.00px;height:360.60px;background:#dadada"></div>
<div class="a" style="left:551.70px;top:177.50px;width:1.00px;height:14.90px;background:#c8c8c8"></div>
<div class="a" style="left:602.40px;top:192.40px;width:1.00px;height:360.60px;background:#dadada"></div>
<div class="a" style="left:602.40px;top:177.50px;width:1.00px;height:14.90px;background:#c8c8c8"></div>
<div class="a" style="left:653.10px;top:192.40px;width:1.00px;height:360.60px;background:#dadada"></div>
<div class="a" style="left:653.10px;top:177.50px;width:1.00px;height:14.90px;background:#c8c8c8"></div>
<div class="a" style="left:703.80px;top:192.40px;width:1.00px;height:360.60px;background:#dadada"></div>
<div class="a" style="left:703.80px;top:177.50px;width:1.00px;height:14.90px;background:#c8c8c8"></div>
<div class="a" style="left:754.50px;top:192.40px;width:1.00px;height:360.60px;background:#dadada"></div>
<div class="a" style="left:754.50px;top:177.50px;width:1.00px;height:14.90px;background:#c8c8c8"></div>
<div class="a" style="left:805.20px;top:192.40px;width:1.00px;height:360.60px;background:#dadada"></div>
<div class="a" style="left:805.20px;top:177.50px;width:1.00px;height:14.90px;background:#c8c8c8"></div>
<div class="a" style="left:855.90px;top:192.40px;width:1.00px;height:360.60px;background:#dadada"></div>
<div class="a" style="left:855.90px;top:177.50px;width:1.00px;height:14.90px;background:#c8c8c8"></div>
<div class="a" style="left:906.60px;top:192.40px;width:1.00px;height:360.60px;background:#dadada"></div>
<div class="a" style="left:906.60px;top:177.50px;width:1.00px;height:14.90px;background:#c8c8c8"></div>
<div class="a" style="left:957.30px;top:192.40px;width:1.00px;height:360.60px;background:#dadada"></div>
<div class="a" style="left:957.30px;top:177.50px;width:1.00px;height:14.90px;background:#c8c8c8"></div>
<div class="a" style="left:1008.00px;top:192.40px;width:1.00px;height:360.60px;background:#dadada"></div>
<div class="a" style="left:1008.00px;top:177.50px;width:1.00px;height:14.90px;background:#c8c8c8"></div>
<div class="a" style="left:1058.70px;top:192.40px;width:1.00px;height:360.60px;background:#dadada"></div>
<div class="a" style="left:1058.70px;top:177.50px;width:1.00px;height:14.90px;background:#c8c8c8"></div>
<div class="a" style="left:20.00px;top:207.73px;width:1045.20px;height:1.00px;background:#dadada"></div>
<div class="a" style="left:0.00px;top:207.73px;width:20.00px;height:1.00px;background:#c8c8c8"></div>
<div class="a" style="left:20.00px;top:223.56px;width:1045.20px;height:1.00px;background:#dadada"></div>
<div class="a" style="left:0.00px;top:223.56px;width:20.00px;height:1.00px;background:#c8c8c8"></div>
<div class="a" style="left:20.00px;top:378.50px;width:1045.20px;height:1.00px;background:#dadada"></div>
<div class="a" style="left:0.00px;top:378.50px;width:20.00px;height:1.00px;background:#c8c8c8"></div>
<div class="a" style="left:20.00px;top:394.33px;width:1045.20px;height:1.00px;background:#dadada"></div>
<div class="a" style="left:0.00px;top:394.33px;width:20.00px;height:1.00px;background:#c8c8c8"></div>
<div class="a" style="left:20.00px;top:410.16px;width:1045.20px;height:1.00px;background:#dadada"></div>
<div class="a" style="left:0.00px;top:410.16px;width:20.00px;height:1.00px;background:#c8c8c8"></div>
<div class="a" style="left:20.00px;top:425.99px;width:1045.20px;height:1.00px;background:#dadada"></div>
<div class="a" style="left:0.00px;top:425.99px;width:20.00px;height:1.00px;background:#c8c8c8"></div>
<div class="a" style="left:20.00px;top:441.82px;width:1045.20px;height:1.00px;background:#dadada"></div>
<div class="a" style="left:0.00px;top:441.82px;width:20.00px;height:1.00px;background:#c8c8c8"></div>
<div class="a" style="left:20.00px;top:457.65px;width:1045.20px;height:1.00px;background:#dadada"></div>
<div class="a" style="left:0.00px;top:457.65px;width:20.00px;height:1.00px;background:#c8c8c8"></div>
<div class="a" style="left:20.00px;top:473.48px;width:1045.20px;height:1.00px;background:#dadada"></div>
<div class="a" style="left:0.00px;top:473.48px;width:20.00px;height:1.00px;background:#c8c8c8"></div>
<div class="a" style="left:20.00px;top:489.31px;width:1045.20px;height:1.00px;background:#dadada"></div>
<div class="a" style="left:0.00px;top:489.31px;width:20.00px;height:1.00px;background:#c8c8c8"></div>
<div class="a" style="left:20.00px;top:505.14px;width:1045.20px;height:1.00px;background:#dadada"></div>
<div class="a" style="left:0.00px;top:505.14px;width:20.00px;height:1.00px;background:#c8c8c8"></div>
<div class="a" style="left:20.00px;top:520.97px;width:1045.20px;height:1.00px;background:#dadada"></div>
<div class="a" style="left:0.00px;top:520.97px;width:20.00px;height:1.00px;background:#c8c8c8"></div>
<div class="a" style="left:20.00px;top:536.80px;width:1045.20px;height:1.00px;background:#dadada"></div>
<div class="a" style="left:0.00px;top:536.80px;width:20.00px;height:1.00px;background:#c8c8c8"></div>
<div class="a" style="left:20.00px;top:552.63px;width:1045.20px;height:1.00px;background:#dadada"></div>
<div class="a" style="left:0.00px;top:552.63px;width:20.00px;height:1.00px;background:#c8c8c8"></div>
<div class="a" style="left:0.00px;top:191.90px;width:1065.20px;height:1.00px;background:#b8b8b8"></div>
<div class="a" style="left:19.50px;top:192.40px;width:1.00px;height:360.60px;background:#b8b8b8"></div>
<div class="a" style="left:42.38px;top:179.50px;font-size:9.8px;line-height:9.8px;color:#444;transform:scaleX(1.0000);transform-origin:0 0;-webkit-text-stroke:0.1px currentColor">A</div>
<div class="a" style="left:93.23px;top:179.50px;font-size:9.8px;line-height:9.8px;color:#444;transform:scaleX(1.0000);transform-origin:0 0;-webkit-text-stroke:0.1px currentColor">B</div>
<div class="a" style="left:232.16px;top:179.50px;font-size:9.8px;line-height:9.8px;color:#444;transform:scaleX(1.0000);transform-origin:0 0;-webkit-text-stroke:0.1px currentColor">C</div>
<div class="a" style="left:371.21px;top:179.50px;font-size:9.8px;line-height:9.8px;color:#444;transform:scaleX(1.0000);transform-origin:0 0;-webkit-text-stroke:0.1px currentColor">D</div>
<div class="a" style="left:422.18px;top:179.50px;font-size:9.8px;line-height:9.8px;color:#444;transform:scaleX(1.0000);transform-origin:0 0;-webkit-text-stroke:0.1px currentColor">E</div>
<div class="a" style="left:473.16px;top:179.50px;font-size:9.8px;line-height:9.8px;color:#444;transform:scaleX(1.0000);transform-origin:0 0;-webkit-text-stroke:0.1px currentColor">F</div>
<div class="a" style="left:523.04px;top:179.50px;font-size:9.8px;line-height:9.8px;color:#444;transform:scaleX(1.0000);transform-origin:0 0;-webkit-text-stroke:0.1px currentColor">G</div>
<div class="a" style="left:574.01px;top:179.50px;font-size:9.8px;line-height:9.8px;color:#444;transform:scaleX(1.0000);transform-origin:0 0;-webkit-text-stroke:0.1px currentColor">H</div>
<div class="a" style="left:626.89px;top:179.50px;font-size:9.8px;line-height:9.8px;color:#444;transform:scaleX(1.0000);transform-origin:0 0;-webkit-text-stroke:0.1px currentColor">I</div>
<div class="a" style="left:676.50px;top:179.50px;font-size:9.8px;line-height:9.8px;color:#444;transform:scaleX(1.0000);transform-origin:0 0;-webkit-text-stroke:0.1px currentColor">J</div>
<div class="a" style="left:726.38px;top:179.50px;font-size:9.8px;line-height:9.8px;color:#444;transform:scaleX(1.0000);transform-origin:0 0;-webkit-text-stroke:0.1px currentColor">K</div>
<div class="a" style="left:777.62px;top:179.50px;font-size:9.8px;line-height:9.8px;color:#444;transform:scaleX(1.0000);transform-origin:0 0;-webkit-text-stroke:0.1px currentColor">L</div>
<div class="a" style="left:826.97px;top:179.50px;font-size:9.8px;line-height:9.8px;color:#444;transform:scaleX(1.0000);transform-origin:0 0;-webkit-text-stroke:0.1px currentColor">M</div>
<div class="a" style="left:878.21px;top:179.50px;font-size:9.8px;line-height:9.8px;color:#444;transform:scaleX(1.0000);transform-origin:0 0;-webkit-text-stroke:0.1px currentColor">N</div>
<div class="a" style="left:928.64px;top:179.50px;font-size:9.8px;line-height:9.8px;color:#444;transform:scaleX(1.0000);transform-origin:0 0;-webkit-text-stroke:0.1px currentColor">O</div>
<div class="a" style="left:979.88px;top:179.50px;font-size:9.8px;line-height:9.8px;color:#444;transform:scaleX(1.0000);transform-origin:0 0;-webkit-text-stroke:0.1px currentColor">P</div>
<div class="a" style="left:1030.04px;top:179.50px;font-size:9.8px;line-height:9.8px;color:#444;transform:scaleX(1.0000);transform-origin:0 0;-webkit-text-stroke:0.1px currentColor">Q</div>
<div class="a" style="left:7.57px;top:197.03px;font-size:9.8px;line-height:9.8px;color:#444;transform:scaleX(1.0000);transform-origin:0 0;-webkit-text-stroke:0.1px currentColor">1</div>
<div class="a" style="left:7.57px;top:212.86px;font-size:9.8px;line-height:9.8px;color:#444;transform:scaleX(1.0000);transform-origin:0 0;-webkit-text-stroke:0.1px currentColor">2</div>
<div class="a" style="left:7.57px;top:367.80px;font-size:9.8px;line-height:9.8px;color:#4f5f55;transform:scaleX(1.0000);transform-origin:0 0;-webkit-text-stroke:0.1px currentColor">3</div>
<div class="a" style="left:7.57px;top:383.63px;font-size:9.8px;line-height:9.8px;color:#444;transform:scaleX(1.0000);transform-origin:0 0;-webkit-text-stroke:0.1px currentColor">4</div>
<div class="a" style="left:7.57px;top:399.46px;font-size:9.8px;line-height:9.8px;color:#444;transform:scaleX(1.0000);transform-origin:0 0;-webkit-text-stroke:0.1px currentColor">5</div>
<div class="a" style="left:7.57px;top:415.29px;font-size:9.8px;line-height:9.8px;color:#444;transform:scaleX(1.0000);transform-origin:0 0;-webkit-text-stroke:0.1px currentColor">6</div>
<div class="a" style="left:7.57px;top:431.12px;font-size:9.8px;line-height:9.8px;color:#444;transform:scaleX(1.0000);transform-origin:0 0;-webkit-text-stroke:0.1px currentColor">7</div>
<div class="a" style="left:7.57px;top:446.95px;font-size:9.8px;line-height:9.8px;color:#444;transform:scaleX(1.0000);transform-origin:0 0;-webkit-text-stroke:0.1px currentColor">8</div>
<div class="a" style="left:7.57px;top:462.78px;font-size:9.8px;line-height:9.8px;color:#444;transform:scaleX(1.0000);transform-origin:0 0;-webkit-text-stroke:0.1px currentColor">9</div>
<div class="a" style="left:4.85px;top:478.61px;font-size:9.8px;line-height:9.8px;color:#444;transform:scaleX(1.0000);transform-origin:0 0;-webkit-text-stroke:0.1px currentColor">10</div>
<div class="a" style="left:5.21px;top:494.44px;font-size:9.8px;line-height:9.8px;color:#444;transform:scaleX(1.0000);transform-origin:0 0;-webkit-text-stroke:0.1px currentColor">11</div>
<div class="a" style="left:4.85px;top:510.27px;font-size:9.8px;line-height:9.8px;color:#444;transform:scaleX(1.0000);transform-origin:0 0;-webkit-text-stroke:0.1px currentColor">12</div>
<div class="a" style="left:4.85px;top:526.10px;font-size:9.8px;line-height:9.8px;color:#444;transform:scaleX(1.0000);transform-origin:0 0;-webkit-text-stroke:0.1px currentColor">13</div>
<div class="a" style="left:4.85px;top:541.93px;font-size:9.8px;line-height:9.8px;color:#444;transform:scaleX(1.0000);transform-origin:0 0;-webkit-text-stroke:0.1px currentColor">14</div>
<svg class="a" style="left:122.70px;top:225.70px;overflow:hidden;" width="216.8" height="143.3" viewBox="0 0 217 144"><defs>
<filter id="pb" x="-5%" y="-5%" width="110%" height="110%"><feGaussianBlur stdDeviation="0.6"/></filter>
<linearGradient id="ceil" x1="0" y1="0" x2="0" y2="1"><stop offset="0" stop-color="#15231c"/><stop offset="0.6" stop-color="#1d3a2e"/><stop offset="1" stop-color="#2a5a47"/></linearGradient>
<linearGradient id="floor" x1="0" y1="0" x2="0" y2="1"><stop offset="0" stop-color="#3e413f"/><stop offset="1" stop-color="#313332"/></linearGradient>
<linearGradient id="lwg" x1="0" y1="0" x2="1" y2="0"><stop offset="0" stop-color="#12281e"/><stop offset="1" stop-color="#245a47"/></linearGradient>
<linearGradient id="rwg" x1="1" y1="0" x2="0" y2="0"><stop offset="0" stop-color="#163628"/><stop offset="1" stop-color="#2c6a54"/></linearGradient>
</defs>
<g filter="url(#pb)">
<rect x="-3" y="-3" width="223" height="150" fill="#1f3a2e"/>
<polygon points="-3,-3 220,-3 220,116 121,74 94,74 -3,122" fill="#24503f"/>
<polygon points="-3,122 94,74 121,74 220,116 220,147 -3,147" fill="url(#floor)"/>
<polygon points="94,74 121,74 150,147 64,147" fill="#474a48" opacity="0.8"/>
<polygon points="-3,-5.096774193548387 93,62.0 93,74.0 -3,123.54838709677419" fill="url(#lwg)"/><polygon points="2.2,23.0 7.9,25.6 7.9,41.8 2.2,40.1" fill="#dfe8e3" opacity="1.0"/><polygon points="3.4,50.1 8.8,51.2 8.8,67.2 3.4,67.1" fill="#dfe8e3" opacity="1.0"/><polygon points="1.8,76.9 7.0,76.4 7.0,90.4 1.8,91.6" fill="#dfe8e3" opacity="1.0"/><line x1="-2" y1="123.0" x2="13" y2="6.1" stroke="#3b8a6c" stroke-width="3.6"/><line x1="-2" y1="-4.4" x2="13" y2="115.3" stroke="#2a6a53" stroke-width="2.9"/><line x1="-2" y1="46.6" x2="13" y2="49.8" stroke="#173428" stroke-width="1.5"/><polygon points="16.6,29.6 21.6,31.8 21.6,45.7 16.6,44.3" fill="#dfe8e3" opacity="1.0"/><polygon points="17.7,52.8 22.4,53.7 22.4,67.4 17.7,67.3" fill="#dfe8e3" opacity="1.0"/><polygon points="16.2,75.7 20.8,75.4 20.8,87.3 16.2,88.4" fill="#dfe8e3" opacity="1.0"/><line x1="13" y1="115.3" x2="26" y2="15.2" stroke="#3b8a6c" stroke-width="3.1"/><line x1="13" y1="6.1" x2="26" y2="108.6" stroke="#2a6a53" stroke-width="2.5"/><line x1="13" y1="49.8" x2="26" y2="52.5" stroke="#173428" stroke-width="1.3"/><polygon points="29.1,35.3 33.3,37.2 33.3,49.0 29.1,47.8" fill="#dfe8e3" opacity="1.0"/><polygon points="30.0,55.2 33.9,55.9 33.9,67.6 30.0,67.6" fill="#dfe8e3" opacity="1.0"/><polygon points="28.8,74.7 32.6,74.4 32.6,84.7 28.8,85.5" fill="#dfe8e3" opacity="1.0"/><line x1="26" y1="108.6" x2="37" y2="22.9" stroke="#3b8a6c" stroke-width="2.6"/><line x1="26" y1="15.2" x2="37" y2="102.9" stroke="#2a6a53" stroke-width="2.1"/><line x1="26" y1="52.5" x2="37" y2="54.9" stroke="#173428" stroke-width="1.1"/><polygon points="39.8,40.1 43.6,41.9 43.6,52.0 39.8,50.9" fill="#dfe8e3" opacity="1.0"/><polygon points="40.6,57.2 44.2,57.8 44.2,67.8 40.6,67.8" fill="#dfe8e3" opacity="1.0"/><polygon points="39.5,73.9 43.0,73.6 43.0,82.3 39.5,83.1" fill="#dfe8e3" opacity="1.0"/><line x1="37" y1="102.9" x2="47" y2="29.8" stroke="#3b8a6c" stroke-width="2.4"/><line x1="37" y1="22.9" x2="47" y2="97.7" stroke="#2a6a53" stroke-width="1.9"/><line x1="37" y1="54.9" x2="47" y2="57.0" stroke="#173428" stroke-width="1.0"/><polygon points="49.2,44.4 52.3,45.8 52.3,54.4 49.2,53.6" fill="#dfe8e3" opacity="1.0"/><polygon points="49.9,58.9 52.8,59.5 52.8,68.0 49.9,67.9" fill="#dfe8e3" opacity="1.0"/><polygon points="49.0,73.1 51.8,72.9 51.8,80.4 49.0,81.0" fill="#dfe8e3" opacity="1.0"/><line x1="47" y1="97.7" x2="55" y2="35.4" stroke="#3b8a6c" stroke-width="1.9"/><line x1="47" y1="29.8" x2="55" y2="93.6" stroke="#2a6a53" stroke-width="1.5"/><line x1="47" y1="57.0" x2="55" y2="58.7" stroke="#173428" stroke-width="0.8"/><polygon points="57.0,48.0 59.6,49.2 59.6,56.5 57.0,55.8" fill="#dfe8e3" opacity="0.7"/><polygon points="57.5,60.3 60.0,60.8 60.0,68.1 57.5,68.1" fill="#dfe8e3" opacity="0.7"/><polygon points="56.8,72.5 59.2,72.3 59.2,78.7 56.8,79.3" fill="#dfe8e3" opacity="0.7"/><line x1="55" y1="93.6" x2="62" y2="40.3" stroke="#3b8a6c" stroke-width="1.7"/><line x1="55" y1="35.4" x2="62" y2="90.0" stroke="#2a6a53" stroke-width="1.3"/><line x1="55" y1="58.7" x2="62" y2="60.2" stroke="#173428" stroke-width="0.7"/><polygon points="63.7,51.0 66.0,52.1 66.0,58.4 63.7,57.7" fill="#dfe8e3" opacity="0.7"/><polygon points="64.2,61.6 66.3,62.0 66.3,68.2 64.2,68.2" fill="#dfe8e3" opacity="0.7"/><polygon points="63.5,72.0 65.6,71.8 65.6,77.3 63.5,77.7" fill="#dfe8e3" opacity="0.7"/><line x1="62" y1="90.0" x2="68" y2="44.5" stroke="#3b8a6c" stroke-width="1.4"/><line x1="62" y1="40.3" x2="68" y2="86.9" stroke="#2a6a53" stroke-width="1.2"/><line x1="62" y1="60.2" x2="68" y2="61.5" stroke="#173428" stroke-width="0.6"/><polygon points="69.4,53.6 71.3,54.5 71.3,59.9 69.4,59.3" fill="#dfe8e3" opacity="0.7"/><polygon points="69.8,62.7 71.6,63.0 71.6,68.3 69.8,68.3" fill="#dfe8e3" opacity="0.7"/><polygon points="69.2,71.5 71.0,71.4 71.0,76.1 69.2,76.5" fill="#dfe8e3" opacity="0.7"/><line x1="68" y1="86.9" x2="73" y2="48.0" stroke="#3b8a6c" stroke-width="1.2"/><line x1="68" y1="44.5" x2="73" y2="84.3" stroke="#2a6a53" stroke-width="1.0"/><line x1="68" y1="61.5" x2="73" y2="62.5" stroke="#173428" stroke-width="0.5"/><polygon points="74.1,55.8 75.6,56.5 75.6,61.1 74.1,60.7" fill="#dfe8e3" opacity="0.7"/><polygon points="74.4,63.5 75.9,63.8 75.9,68.4 74.4,68.4" fill="#dfe8e3" opacity="0.7"/><polygon points="74.0,71.2 75.4,71.1 75.4,75.1 74.0,75.4" fill="#dfe8e3" opacity="0.7"/><line x1="73" y1="84.3" x2="77" y2="50.8" stroke="#3b8a6c" stroke-width="1.0"/><line x1="73" y1="48.0" x2="77" y2="82.3" stroke="#2a6a53" stroke-width="0.8"/><line x1="73" y1="62.5" x2="77" y2="63.4" stroke="#173428" stroke-width="0.5"/><polygon points="78.1,57.6 79.6,58.3 79.6,62.3 78.1,61.8" fill="#dfe8e3" opacity="0.35"/><polygon points="78.4,64.3 79.9,64.6 79.9,68.5 78.4,68.5" fill="#dfe8e3" opacity="0.35"/><polygon points="78.0,70.9 79.4,70.8 79.4,74.2 78.0,74.5" fill="#dfe8e3" opacity="0.35"/><line x1="77" y1="82.3" x2="81" y2="53.6" stroke="#3b8a6c" stroke-width="1.0"/><line x1="77" y1="50.8" x2="81" y2="80.2" stroke="#2a6a53" stroke-width="0.8"/><line x1="77" y1="63.4" x2="81" y2="64.2" stroke="#173428" stroke-width="0.5"/><polygon points="81.8,59.3 83.0,59.8 83.0,63.2 81.8,62.9" fill="#dfe8e3" opacity="0.35"/><polygon points="82.1,65.0 83.2,65.2 83.2,68.5 82.1,68.5" fill="#dfe8e3" opacity="0.35"/><polygon points="81.8,70.6 82.8,70.5 82.8,73.4 81.8,73.6" fill="#dfe8e3" opacity="0.35"/><line x1="81" y1="80.2" x2="84" y2="55.7" stroke="#3b8a6c" stroke-width="0.7"/><line x1="81" y1="53.6" x2="84" y2="78.6" stroke="#2a6a53" stroke-width="0.6"/><line x1="81" y1="64.2" x2="84" y2="64.9" stroke="#173428" stroke-width="0.5"/><polygon points="84.8,60.7 86.0,61.2 86.0,64.1 84.8,63.7" fill="#dfe8e3" opacity="0.35"/><polygon points="85.1,65.5 86.2,65.7 86.2,68.6 85.1,68.6" fill="#dfe8e3" opacity="0.35"/><polygon points="84.8,70.3 85.8,70.2 85.8,72.7 84.8,73.0" fill="#dfe8e3" opacity="0.35"/><line x1="84" y1="78.6" x2="87" y2="57.8" stroke="#3b8a6c" stroke-width="0.7"/><line x1="84" y1="55.7" x2="87" y2="77.1" stroke="#2a6a53" stroke-width="0.6"/><line x1="84" y1="64.9" x2="87" y2="65.5" stroke="#173428" stroke-width="0.5"/><polygon points="87.6,61.9 88.3,62.3 88.3,64.7 87.6,64.5" fill="#dfe8e3" opacity="0.35"/><polygon points="87.7,66.0 88.4,66.2 88.4,68.6 87.7,68.6" fill="#dfe8e3" opacity="0.35"/><polygon points="87.5,70.1 88.2,70.1 88.2,72.2 87.5,72.4" fill="#dfe8e3" opacity="0.35"/><line x1="87" y1="77.1" x2="89" y2="59.2" stroke="#3b8a6c" stroke-width="0.6"/><line x1="87" y1="57.8" x2="89" y2="76.1" stroke="#2a6a53" stroke-width="0.5"/><line x1="87" y1="65.5" x2="89" y2="65.9" stroke="#173428" stroke-width="0.5"/><polygon points="89.6,62.8 90.3,63.2 90.3,65.3 89.6,65.1" fill="#dfe8e3" opacity="0.35"/><polygon points="89.7,66.4 90.4,66.6 90.4,68.7 89.7,68.7" fill="#dfe8e3" opacity="0.35"/><polygon points="89.5,70.0 90.2,69.9 90.2,71.7 89.5,71.9" fill="#dfe8e3" opacity="0.35"/><line x1="89" y1="76.1" x2="91" y2="60.6" stroke="#3b8a6c" stroke-width="0.6"/><line x1="89" y1="59.2" x2="91" y2="75.0" stroke="#2a6a53" stroke-width="0.5"/><line x1="89" y1="65.9" x2="91" y2="66.4" stroke="#173428" stroke-width="0.5"/><polygon points="91.6,63.7 92.3,64.1 92.3,65.9 91.6,65.7" fill="#dfe8e3" opacity="0.35"/><polygon points="91.7,66.8 92.4,66.9 92.4,68.7 91.7,68.7" fill="#dfe8e3" opacity="0.35"/><polygon points="91.5,69.8 92.2,69.7 92.2,71.3 91.5,71.5" fill="#dfe8e3" opacity="0.35"/><line x1="91" y1="75.0" x2="93" y2="62.0" stroke="#3b8a6c" stroke-width="0.6"/><line x1="91" y1="60.6" x2="93" y2="74.0" stroke="#2a6a53" stroke-width="0.5"/><line x1="91" y1="66.4" x2="93" y2="66.8" stroke="#173428" stroke-width="0.5"/><line x1="-2" y1="-4.4" x2="-2" y2="123.0" stroke="#0e1e16" stroke-width="4.2"/><line x1="1.0" y1="-4.4" x2="1.0" y2="123.0" stroke="#2f7a5e" stroke-width="1.8"/><line x1="13" y1="6.1" x2="13" y2="115.3" stroke="#0e1e16" stroke-width="3.6"/><line x1="15.6" y1="6.1" x2="15.6" y2="115.3" stroke="#2f7a5e" stroke-width="1.6"/><line x1="26" y1="15.2" x2="26" y2="108.6" stroke="#0e1e16" stroke-width="3.1"/><line x1="28.2" y1="15.2" x2="28.2" y2="108.6" stroke="#2f7a5e" stroke-width="1.3"/><line x1="37" y1="22.9" x2="37" y2="102.9" stroke="#0e1e16" stroke-width="2.8"/><line x1="39.0" y1="22.9" x2="39.0" y2="102.9" stroke="#2f7a5e" stroke-width="1.2"/><line x1="47" y1="29.8" x2="47" y2="97.7" stroke="#0e1e16" stroke-width="2.2"/><line x1="48.6" y1="29.8" x2="48.6" y2="97.7" stroke="#2f7a5e" stroke-width="1.0"/><line x1="55" y1="35.4" x2="55" y2="93.6" stroke="#0e1e16" stroke-width="2.0"/><line x1="56.4" y1="35.4" x2="56.4" y2="93.6" stroke="#2f7a5e" stroke-width="0.8"/><line x1="62" y1="40.3" x2="62" y2="90.0" stroke="#0e1e16" stroke-width="1.7"/><line x1="63.2" y1="40.3" x2="63.2" y2="90.0" stroke="#2f7a5e" stroke-width="0.7"/><line x1="68" y1="44.5" x2="68" y2="86.9" stroke="#0e1e16" stroke-width="1.4"/><line x1="69.0" y1="44.5" x2="69.0" y2="86.9" stroke="#2f7a5e" stroke-width="0.6"/><line x1="73" y1="48.0" x2="73" y2="84.3" stroke="#0e1e16" stroke-width="1.1"/><line x1="73.8" y1="48.0" x2="73.8" y2="84.3" stroke="#2f7a5e" stroke-width="0.5"/><line x1="77" y1="50.8" x2="77" y2="82.3" stroke="#0e1e16" stroke-width="1.1"/><line x1="77.8" y1="50.8" x2="77.8" y2="82.3" stroke="#2f7a5e" stroke-width="0.5"/><line x1="81" y1="53.6" x2="81" y2="80.2" stroke="#0e1e16" stroke-width="0.8"/><line x1="81.6" y1="53.6" x2="81.6" y2="80.2" stroke="#2f7a5e" stroke-width="0.4"/><line x1="84" y1="55.7" x2="84" y2="78.6" stroke="#0e1e16" stroke-width="0.8"/><line x1="84.6" y1="55.7" x2="84.6" y2="78.6" stroke="#2f7a5e" stroke-width="0.4"/><line x1="87" y1="57.8" x2="87" y2="77.1" stroke="#0e1e16" stroke-width="0.7"/><line x1="87.4" y1="57.8" x2="87.4" y2="77.1" stroke="#2f7a5e" stroke-width="0.4"/><line x1="89" y1="59.2" x2="89" y2="76.1" stroke="#0e1e16" stroke-width="0.7"/><line x1="89.4" y1="59.2" x2="89.4" y2="76.1" stroke="#2f7a5e" stroke-width="0.4"/><line x1="91" y1="60.6" x2="91" y2="75.0" stroke="#0e1e16" stroke-width="0.7"/><line x1="91.4" y1="60.6" x2="91.4" y2="75.0" stroke="#2f7a5e" stroke-width="0.4"/><polygon points="220,-5.096774193548387 124,62.0 124,74.0 220,123.54838709677419" fill="url(#rwg)"/><polygon points="214.8,23.0 209.1,25.6 209.1,41.8 214.8,40.1" fill="#dfe8e3" opacity="1.0"/><polygon points="213.6,50.1 208.2,51.2 208.2,67.2 213.6,67.1" fill="#dfe8e3" opacity="1.0"/><polygon points="215.2,76.9 210.0,76.4 210.0,90.4 215.2,91.6" fill="#dfe8e3" opacity="1.0"/><line x1="219" y1="123.0" x2="204" y2="6.1" stroke="#3b8a6c" stroke-width="3.6"/><line x1="219" y1="-4.4" x2="204" y2="115.3" stroke="#2a6a53" stroke-width="2.9"/><line x1="219" y1="46.6" x2="204" y2="49.8" stroke="#173428" stroke-width="1.5"/><polygon points="200.4,29.6 195.4,31.8 195.4,45.7 200.4,44.3" fill="#dfe8e3" opacity="1.0"/><polygon points="199.3,52.8 194.6,53.7 194.6,67.4 199.3,67.3" fill="#dfe8e3" opacity="1.0"/><polygon points="200.8,75.7 196.2,75.4 196.2,87.3 200.8,88.4" fill="#dfe8e3" opacity="1.0"/><line x1="204" y1="115.3" x2="191" y2="15.2" stroke="#3b8a6c" stroke-width="3.1"/><line x1="204" y1="6.1" x2="191" y2="108.6" stroke="#2a6a53" stroke-width="2.5"/><line x1="204" y1="49.8" x2="191" y2="52.5" stroke="#173428" stroke-width="1.3"/><polygon points="187.9,35.3 183.7,37.2 183.7,49.0 187.9,47.8" fill="#dfe8e3" opacity="1.0"/><polygon points="187.0,55.2 183.1,55.9 183.1,67.6 187.0,67.6" fill="#dfe8e3" opacity="1.0"/><polygon points="188.2,74.7 184.4,74.4 184.4,84.7 188.2,85.5" fill="#dfe8e3" opacity="1.0"/><line x1="191" y1="108.6" x2="180" y2="22.9" stroke="#3b8a6c" stroke-width="2.6"/><line x1="191" y1="15.2" x2="180" y2="102.9" stroke="#2a6a53" stroke-width="2.1"/><line x1="191" y1="52.5" x2="180" y2="54.9" stroke="#173428" stroke-width="1.1"/><polygon points="177.2,40.1 173.4,41.9 173.4,52.0 177.2,50.9" fill="#dfe8e3" opacity="1.0"/><polygon points="176.4,57.2 172.8,57.8 172.8,67.8 176.4,67.8" fill="#dfe8e3" opacity="1.0"/><polygon points="177.5,73.9 174.0,73.6 174.0,82.3 177.5,83.1" fill="#dfe8e3" opacity="1.0"/><line x1="180" y1="102.9" x2="170" y2="29.8" stroke="#3b8a6c" stroke-width="2.4"/><line x1="180" y1="22.9" x2="170" y2="97.7" stroke="#2a6a53" stroke-width="1.9"/><line x1="180" y1="54.9" x2="170" y2="57.0" stroke="#173428" stroke-width="1.0"/><polygon points="167.8,44.4 164.7,45.8 164.7,54.4 167.8,53.6" fill="#dfe8e3" opacity="1.0"/><polygon points="167.1,58.9 164.2,59.5 164.2,68.0 167.1,67.9" fill="#dfe8e3" opacity="1.0"/><polygon points="168.0,73.1 165.2,72.9 165.2,80.4 168.0,81.0" fill="#dfe8e3" opacity="1.0"/><line x1="170" y1="97.7" x2="162" y2="35.4" stroke="#3b8a6c" stroke-width="1.9"/><line x1="170" y1="29.8" x2="162" y2="93.6" stroke="#2a6a53" stroke-width="1.5"/><line x1="170" y1="57.0" x2="162" y2="58.7" stroke="#173428" stroke-width="0.8"/><polygon points="160.0,48.0 157.4,49.2 157.4,56.5 160.0,55.8" fill="#dfe8e3" opacity="0.7"/><polygon points="159.5,60.3 157.0,60.8 157.0,68.1 159.5,68.1" fill="#dfe8e3" opacity="0.7"/><polygon points="160.2,72.5 157.8,72.3 157.8,78.7 160.2,79.3" fill="#dfe8e3" opacity="0.7"/><line x1="162" y1="93.6" x2="155" y2="40.3" stroke="#3b8a6c" stroke-width="1.7"/><line x1="162" y1="35.4" x2="155" y2="90.0" stroke="#2a6a53" stroke-width="1.3"/><line x1="162" y1="58.7" x2="155" y2="60.2" stroke="#173428" stroke-width="0.7"/><polygon points="153.3,51.0 151.0,52.1 151.0,58.4 153.3,57.7" fill="#dfe8e3" opacity="0.7"/><polygon points="152.8,61.6 150.7,62.0 150.7,68.2 152.8,68.2" fill="#dfe8e3" opacity="0.7"/><polygon points="153.5,72.0 151.4,71.8 151.4,77.3 153.5,77.7" fill="#dfe8e3" opacity="0.7"/><line x1="155" y1="90.0" x2="149" y2="44.5" stroke="#3b8a6c" stroke-width="1.4"/><line x1="155" y1="40.3" x2="149" y2="86.9" stroke="#2a6a53" stroke-width="1.2"/><line x1="155" y1="60.2" x2="149" y2="61.5" stroke="#173428" stroke-width="0.6"/><polygon points="147.6,53.6 145.7,54.5 145.7,59.9 147.6,59.3" fill="#dfe8e3" opacity="0.7"/><polygon points="147.2,62.7 145.4,63.0 145.4,68.3 147.2,68.3" fill="#dfe8e3" opacity="0.7"/><polygon points="147.8,71.5 146.0,71.4 146.0,76.1 147.8,76.5" fill="#dfe8e3" opacity="0.7"/><line x1="149" y1="86.9" x2="144" y2="48.0" stroke="#3b8a6c" stroke-width="1.2"/><line x1="149" y1="44.5" x2="144" y2="84.3" stroke="#2a6a53" stroke-width="1.0"/><line x1="149" y1="61.5" x2="144" y2="62.5" stroke="#173428" stroke-width="0.5"/><polygon points="142.9,55.8 141.4,56.5 141.4,61.1 142.9,60.7" fill="#dfe8e3" opacity="0.7"/><polygon points="142.6,63.5 141.1,63.8 141.1,68.4 142.6,68.4" fill="#dfe8e3" opacity="0.7"/><polygon points="143.0,71.2 141.6,71.1 141.6,75.1 143.0,75.4" fill="#dfe8e3" opacity="0.7"/><line x1="144" y1="84.3" x2="140" y2="50.8" stroke="#3b8a6c" stroke-width="1.0"/><line x1="144" y1="48.0" x2="140" y2="82.3" stroke="#2a6a53" stroke-width="0.8"/><line x1="144" y1="62.5" x2="140" y2="63.4" stroke="#173428" stroke-width="0.5"/><polygon points="138.9,57.6 137.4,58.3 137.4,62.3 138.9,61.8" fill="#dfe8e3" opacity="0.35"/><polygon points="138.6,64.3 137.1,64.6 137.1,68.5 138.6,68.5" fill="#dfe8e3" opacity="0.35"/><polygon points="139.0,70.9 137.6,70.8 137.6,74.2 139.0,74.5" fill="#dfe8e3" opacity="0.35"/><line x1="140" y1="82.3" x2="136" y2="53.6" stroke="#3b8a6c" stroke-width="1.0"/><line x1="140" y1="50.8" x2="136" y2="80.2" stroke="#2a6a53" stroke-width="0.8"/><line x1="140" y1="63.4" x2="136" y2="64.2" stroke="#173428" stroke-width="0.5"/><polygon points="135.2,59.3 134.0,59.8 134.0,63.2 135.2,62.9" fill="#dfe8e3" opacity="0.35"/><polygon points="134.9,65.0 133.8,65.2 133.8,68.5 134.9,68.5" fill="#dfe8e3" opacity="0.35"/><polygon points="135.2,70.6 134.2,70.5 134.2,73.4 135.2,73.6" fill="#dfe8e3" opacity="0.35"/><line x1="136" y1="80.2" x2="133" y2="55.7" stroke="#3b8a6c" stroke-width="0.7"/><line x1="136" y1="53.6" x2="133" y2="78.6" stroke="#2a6a53" stroke-width="0.6"/><line x1="136" y1="64.2" x2="133" y2="64.9" stroke="#173428" stroke-width="0.5"/><polygon points="132.2,60.7 131.0,61.2 131.0,64.1 132.2,63.7" fill="#dfe8e3" opacity="0.35"/><polygon points="131.9,65.5 130.8,65.7 130.8,68.6 131.9,68.6" fill="#dfe8e3" opacity="0.35"/><polygon points="132.2,70.3 131.2,70.2 131.2,72.7 132.2,73.0" fill="#dfe8e3" opacity="0.35"/><line x1="133" y1="78.6" x2="130" y2="57.8" stroke="#3b8a6c" stroke-width="0.7"/><line x1="133" y1="55.7" x2="130" y2="77.1" stroke="#2a6a53" stroke-width="0.6"/><line x1="133" y1="64.9" x2="130" y2="65.5" stroke="#173428" stroke-width="0.5"/><polygon points="129.4,61.9 128.7,62.3 128.7,64.7 129.4,64.5" fill="#dfe8e3" opacity="0.35"/><polygon points="129.3,66.0 128.6,66.2 128.6,68.6 129.3,68.6" fill="#dfe8e3" opacity="0.35"/><polygon points="129.5,70.1 128.8,70.1 128.8,72.2 129.5,72.4" fill="#dfe8e3" opacity="0.35"/><line x1="130" y1="77.1" x2="128" y2="59.2" stroke="#3b8a6c" stroke-width="0.6"/><line x1="130" y1="57.8" x2="128" y2="76.1" stroke="#2a6a53" stroke-width="0.5"/><line x1="130" y1="65.5" x2="128" y2="65.9" stroke="#173428" stroke-width="0.5"/><polygon points="127.4,62.8 126.7,63.2 126.7,65.3 127.4,65.1" fill="#dfe8e3" opacity="0.35"/><polygon points="127.3,66.4 126.6,66.6 126.6,68.7 127.3,68.7" fill="#dfe8e3" opacity="0.35"/><polygon points="127.5,70.0 126.8,69.9 126.8,71.7 127.5,71.9" fill="#dfe8e3" opacity="0.35"/><line x1="128" y1="76.1" x2="126" y2="60.6" stroke="#3b8a6c" stroke-width="0.6"/><line x1="128" y1="59.2" x2="126" y2="75.0" stroke="#2a6a53" stroke-width="0.5"/><line x1="128" y1="65.9" x2="126" y2="66.4" stroke="#173428" stroke-width="0.5"/><polygon points="125.4,63.7 124.7,64.1 124.7,65.9 125.4,65.7" fill="#dfe8e3" opacity="0.35"/><polygon points="125.3,66.8 124.6,66.9 124.6,68.7 125.3,68.7" fill="#dfe8e3" opacity="0.35"/><polygon points="125.5,69.8 124.8,69.7 124.8,71.3 125.5,71.5" fill="#dfe8e3" opacity="0.35"/><line x1="126" y1="75.0" x2="124" y2="62.0" stroke="#3b8a6c" stroke-width="0.6"/><line x1="126" y1="60.6" x2="124" y2="74.0" stroke="#2a6a53" stroke-width="0.5"/><line x1="126" y1="66.4" x2="124" y2="66.8" stroke="#173428" stroke-width="0.5"/><line x1="219" y1="-4.4" x2="219" y2="123.0" stroke="#0e1e16" stroke-width="4.2"/><line x1="216.0" y1="-4.4" x2="216.0" y2="123.0" stroke="#2f7a5e" stroke-width="1.8"/><line x1="204" y1="6.1" x2="204" y2="115.3" stroke="#0e1e16" stroke-width="3.6"/><line x1="201.4" y1="6.1" x2="201.4" y2="115.3" stroke="#2f7a5e" stroke-width="1.6"/><line x1="191" y1="15.2" x2="191" y2="108.6" stroke="#0e1e16" stroke-width="3.1"/><line x1="188.8" y1="15.2" x2="188.8" y2="108.6" stroke="#2f7a5e" stroke-width="1.3"/><line x1="180" y1="22.9" x2="180" y2="102.9" stroke="#0e1e16" stroke-width="2.8"/><line x1="178.0" y1="22.9" x2="178.0" y2="102.9" stroke="#2f7a5e" stroke-width="1.2"/><line x1="170" y1="29.8" x2="170" y2="97.7" stroke="#0e1e16" stroke-width="2.2"/><line x1="168.4" y1="29.8" x2="168.4" y2="97.7" stroke="#2f7a5e" stroke-width="1.0"/><line x1="162" y1="35.4" x2="162" y2="93.6" stroke="#0e1e16" stroke-width="2.0"/><line x1="160.6" y1="35.4" x2="160.6" y2="93.6" stroke="#2f7a5e" stroke-width="0.8"/><line x1="155" y1="40.3" x2="155" y2="90.0" stroke="#0e1e16" stroke-width="1.7"/><line x1="153.8" y1="40.3" x2="153.8" y2="90.0" stroke="#2f7a5e" stroke-width="0.7"/><line x1="149" y1="44.5" x2="149" y2="86.9" stroke="#0e1e16" stroke-width="1.4"/><line x1="148.0" y1="44.5" x2="148.0" y2="86.9" stroke="#2f7a5e" stroke-width="0.6"/><line x1="144" y1="48.0" x2="144" y2="84.3" stroke="#0e1e16" stroke-width="1.1"/><line x1="143.2" y1="48.0" x2="143.2" y2="84.3" stroke="#2f7a5e" stroke-width="0.5"/><line x1="140" y1="50.8" x2="140" y2="82.3" stroke="#0e1e16" stroke-width="1.1"/><line x1="139.2" y1="50.8" x2="139.2" y2="82.3" stroke="#2f7a5e" stroke-width="0.5"/><line x1="136" y1="53.6" x2="136" y2="80.2" stroke="#0e1e16" stroke-width="0.8"/><line x1="135.4" y1="53.6" x2="135.4" y2="80.2" stroke="#2f7a5e" stroke-width="0.4"/><line x1="133" y1="55.7" x2="133" y2="78.6" stroke="#0e1e16" stroke-width="0.8"/><line x1="132.4" y1="55.7" x2="132.4" y2="78.6" stroke="#2f7a5e" stroke-width="0.4"/><line x1="130" y1="57.8" x2="130" y2="77.1" stroke="#0e1e16" stroke-width="0.7"/><line x1="129.6" y1="57.8" x2="129.6" y2="77.1" stroke="#2f7a5e" stroke-width="0.4"/><line x1="128" y1="59.2" x2="128" y2="76.1" stroke="#0e1e16" stroke-width="0.7"/><line x1="127.6" y1="59.2" x2="127.6" y2="76.1" stroke="#2f7a5e" stroke-width="0.4"/><line x1="126" y1="60.6" x2="126" y2="75.0" stroke="#0e1e16" stroke-width="0.7"/><line x1="125.6" y1="60.6" x2="125.6" y2="75.0" stroke="#2f7a5e" stroke-width="0.4"/><polygon points="4,26 10,24 10,70 4,74" fill="#e2eae6" opacity="0.9"/><polygon points="206,22 213,20 213,92 206,88" fill="#e2eae6" opacity="0.9"/><polygon points="-3,-3 220,-3 122,62 93,62" fill="url(#ceil)"/><line x1="8" y1="2.6" x2="209" y2="2.6" stroke="#2d5f4a" stroke-width="1.2" opacity="0.75"/><line x1="18" y1="9.6" x2="199" y2="9.6" stroke="#2d5f4a" stroke-width="1.0" opacity="0.75"/><line x1="27" y1="15.9" x2="190" y2="15.9" stroke="#2d5f4a" stroke-width="0.9" opacity="0.75"/><line x1="35" y1="21.5" x2="182" y2="21.5" stroke="#2d5f4a" stroke-width="0.8" opacity="0.75"/><line x1="42" y1="26.4" x2="175" y2="26.4" stroke="#2d5f4a" stroke-width="0.7" opacity="0.75"/><line x1="49" y1="31.2" x2="168" y2="31.2" stroke="#2d5f4a" stroke-width="0.6" opacity="0.75"/><line x1="55" y1="35.4" x2="162" y2="35.4" stroke="#2d5f4a" stroke-width="0.5" opacity="0.75"/><line x1="61" y1="39.6" x2="156" y2="39.6" stroke="#2d5f4a" stroke-width="0.5" opacity="0.75"/><line x1="66" y1="43.1" x2="151" y2="43.1" stroke="#2d5f4a" stroke-width="0.5" opacity="0.75"/><line x1="71" y1="46.6" x2="146" y2="46.6" stroke="#2d5f4a" stroke-width="0.5" opacity="0.75"/><line x1="75" y1="49.4" x2="142" y2="49.4" stroke="#2d5f4a" stroke-width="0.5" opacity="0.75"/><line x1="79" y1="52.2" x2="138" y2="52.2" stroke="#2d5f4a" stroke-width="0.5" opacity="0.75"/><line x1="83" y1="55.0" x2="134" y2="55.0" stroke="#2d5f4a" stroke-width="0.5" opacity="0.75"/><line x1="86" y1="57.1" x2="131" y2="57.1" stroke="#2d5f4a" stroke-width="0.5" opacity="0.75"/><line x1="89" y1="59.2" x2="128" y2="59.2" stroke="#2d5f4a" stroke-width="0.5" opacity="0.75"/><polygon points="93,62 122,62 107.5,70" fill="#1e4034"/><polygon points="-3,120 94,73 95,76 -3,127" fill="#1d211f" opacity="0.75"/><polygon points="220,114 121,73 120,76 220,121" fill="#1d211f" opacity="0.75"/><line x1="-3" y1="129" x2="95" y2="76" stroke="#555957" stroke-width="1" opacity="0.6"/><line x1="220" y1="123" x2="120" y2="76" stroke="#555957" stroke-width="1" opacity="0.6"/><line x1="103" y1="76" x2="14" y2="147" stroke="#181918" stroke-width="2.2"/><line x1="103" y1="76" x2="19" y2="147" stroke="#626562" stroke-width="0.8" opacity="0.8"/><line x1="116" y1="76" x2="213" y2="147" stroke="#181918" stroke-width="2.2"/><line x1="116" y1="76" x2="208" y2="147" stroke="#626562" stroke-width="0.8" opacity="0.8"/><line x1="105.5" y1="74" x2="59.5" y2="147" stroke="#1e201f" stroke-width="1.3" opacity="0.8"/><line x1="106.3" y1="74" x2="78.7" y2="147" stroke="#1e201f" stroke-width="1.3" opacity="0.8"/><line x1="107.0" y1="74" x2="95.5" y2="147" stroke="#1e201f" stroke-width="1.3" opacity="0.8"/><line x1="107.7" y1="74" x2="112.3" y2="147" stroke="#1e201f" stroke-width="1.3" opacity="0.8"/><line x1="108.4" y1="74" x2="129.1" y2="147" stroke="#1e201f" stroke-width="1.3" opacity="0.8"/><line x1="109.2" y1="74" x2="148.3" y2="147" stroke="#1e201f" stroke-width="1.3" opacity="0.8"/><line x1="110.2" y1="74" x2="173.5" y2="147" stroke="#1e201f" stroke-width="1.3" opacity="0.8"/><line x1="107.5" y1="74" x2="71.5" y2="147" stroke="#555855" stroke-width="1" opacity="0.6"/><line x1="107.5" y1="74" x2="103.9" y2="147" stroke="#555855" stroke-width="1" opacity="0.6"/><line x1="107.5" y1="74" x2="138.7" y2="147" stroke="#555855" stroke-width="1" opacity="0.6"/><rect x="103.5" y="63.5" width="8" height="7" fill="#eef2f0"/><rect x="106.5" y="65.5" width="2" height="3" fill="#555"/><rect x="-3" y="-3" width="223" height="4.5" fill="#141f19"/></g></svg>
<div class="a" style="left:450.10px;top:223.50px;width:52.20px;height:156.30px;border:2px solid #2b6144"></div>
<div class="a" style="left:499.80px;top:376.80px;width:4.50px;height:4.50px;background:#2b6144"></div>
<svg class="a" style="left:447.00px;top:284.00px;" width="13" height="13" viewBox="0 0 13 13"><path d="M4.5 0.5h4v4h4v4h-4v4h-4v-4h-4v-4h4z" fill="#fff" stroke="#000" stroke-width="1"/></svg>
<div class="a" style="left:1065.20px;top:175.50px;width:14.80px;height:377.50px;background:#ececec"></div>
<div class="a" style="left:1064.40px;top:191.40px;width:1.20px;height:361.60px;background:#a4a4a4"></div>
<div class="a" style="left:1066.80px;top:178.40px;width:13.20px;height:12.00px;background:#fff;border-bottom:1px solid #c0c0c0;border-left:1px solid #d0d0d0"></div>
<svg class="a" style="left:1070.30px;top:182.30px;" width="6" height="3.5" viewBox="0 0 6 3.5"><path d="M0 3.5L3 0l3 3.5z" fill="#555"/></svg>
<div class="a" style="left:1067.60px;top:190.40px;width:9.80px;height:362.60px;background:#fff;border-left:1px solid #c8c8c8;border-right:1px solid #c8c8c8"></div>
<div class="a" style="left:0.00px;top:553.00px;width:1080.00px;height:22.00px;background:#e6e6e6"></div>
<div class="a" style="left:0.00px;top:553.00px;width:1080.00px;height:1.00px;background:#c6c6c6"></div>
<svg class="a" style="left:20.00px;top:561.00px;" width="4" height="7" viewBox="0 0 4 7"><path d="M3.5 0.5L0.5 3.5l3 3" fill="none" stroke="#bbb" stroke-width="1"/></svg>
<svg class="a" style="left:43.00px;top:561.00px;" width="4" height="7" viewBox="0 0 4 7"><path d="M0.5 0.5l3 3-3 3" fill="none" stroke="#bbb" stroke-width="1"/></svg>
<div class="a" style="left:79.60px;top:553.00px;width:56.10px;height:20.00px;background:#fff;border-left:1px solid #c8c8c8;border-right:1px solid #c8c8c8"></div>
<div class="a" style="left:79.60px;top:571.20px;width:56.10px;height:1.80px;background:#356a50"></div>
<div class="a" style="left:89.00px;top:559.53px;font-size:10px;line-height:10px;color:#2f6b4c;font-weight:bold;transform:scaleX(0.9381);transform-origin:0 0;">Arkusz1</div>
<svg class="a" style="left:161.50px;top:557.50px;" width="13" height="13" viewBox="0 0 13 13"><circle cx="6.5" cy="6.5" r="5.8" fill="none" stroke="#666" stroke-width="1.1"/><path d="M6.5 3v7M3 6.5h7" stroke="#666" stroke-width="1.2"/></svg>
<div class="a" style="left:648.50px;top:560.00px;width:1.00px;height:1.50px;background:#999"></div>
<div class="a" style="left:648.50px;top:563.00px;width:1.00px;height:1.50px;background:#999"></div>
<div class="a" style="left:648.50px;top:566.00px;width:1.00px;height:1.50px;background:#999"></div>
<div class="a" style="left:662.50px;top:559.50px;width:420.00px;height:11.00px;background:#fff;border:1px solid #c6c6c6"></div>
<div class="a" style="left:662.50px;top:559.50px;width:12.00px;height:11.00px;background:#fff;border:1px solid #c6c6c6"></div>
<svg class="a" style="left:666.50px;top:562.00px;" width="3.5" height="6" viewBox="0 0 3.5 6"><path d="M3.5 0v6L0 3z" fill="#555"/></svg>
<div class="a" style="left:0.00px;top:575.00px;width:1080.00px;height:18.00px;background:#f3f3f3"></div>
<div class="a" style="left:0.00px;top:575.00px;width:1080.00px;height:1.00px;background:#d8d8d8"></div>
<div class="a" style="left:7.00px;top:579.71px;font-size:9.2px;line-height:9.2px;color:#777;transform:scaleX(1.0100);transform-origin:0 0;">Gotowy</div>
<div class="a" style="left:65.00px;top:579.71px;font-size:9.2px;line-height:9.2px;color:#555;transform:scaleX(0.9202);transform-origin:0 0;">Caps Lock</div>
<div class="a" style="left:118.00px;top:579.71px;font-size:9.2px;line-height:9.2px;color:#555;transform:scaleX(0.9417);transform-origin:0 0;">Num Lock</div>
<svg class="a" style="left:171.50px;top:578.50px;" width="10" height="12" viewBox="0 0 10 12"><rect x="0" y="0" width="4" height="3" fill="#555"/><rect x="5" y="1" width="5" height="1.5" fill="#555"/><path d="M0 4.5h10M0 7h10M0 9.5h10M0 11.5h10M2 4.5v7M5 4.5v7M8 4.5v7" stroke="#777" stroke-width="0.8"/></svg>
<div class="a" style="left:851.40px;top:575.60px;width:28.40px;height:17.40px;background:#d8d8d8"></div>
<svg class="a" style="left:860.00px;top:579.00px;" width="11" height="11" viewBox="0 0 11 11"><path d="M0.5 0.5h10v10h-10zM0.5 3.8h10M0.5 7.2h10M3.8 0.5v10M7.2 0.5v10" fill="none" stroke="#666" stroke-width="0.9"/></svg>
<svg class="a" style="left:890.00px;top:579.00px;" width="11" height="11" viewBox="0 0 11 11"><rect x="0.5" y="0.5" width="10" height="10" fill="none" stroke="#666" stroke-width="0.9"/><rect x="2.5" y="2.5" width="6" height="6" fill="none" stroke="#888" stroke-width="0.8"/></svg>
<svg class="a" style="left:920.00px;top:579.00px;" width="11" height="11" viewBox="0 0 11 11"><path d="M0.5 0.5v10h10V0.5M3.5 0.5v5h4v-5" fill="none" stroke="#666" stroke-width="0.9"/></svg>
<div class="a" style="left:944.00px;top:584.00px;width:6.00px;height:1.20px;background:#555"></div>
<svg class="a" style="left:953.60px;top:497.50px;overflow:hidden;" width="126.4" height="95.5" viewBox="0 0 126.4 95.5"><defs>
<filter id="wb" x="-10%" y="-10%" width="120%" height="120%"><feGaussianBlur stdDeviation="1.1"/></filter>
<linearGradient id="wall" x1="0" y1="0" x2="1" y2="0"><stop offset="0" stop-color="#cbc9c0"/><stop offset="0.55" stop-color="#d9d7ce"/><stop offset="1" stop-color="#cdcac0"/></linearGradient>
<linearGradient id="ceilw" x1="0" y1="0" x2="0" y2="1"><stop offset="0" stop-color="#a9a8a4"/><stop offset="1" stop-color="#bdbcb7"/></linearGradient>
<linearGradient id="rp" x1="0" y1="0" x2="1" y2="0"><stop offset="0" stop-color="#a3a29d"/><stop offset="1" stop-color="#bcbbb5"/></linearGradient>
<radialGradient id="face" cx="0.5" cy="0.42" r="0.6"><stop offset="0" stop-color="#e0cbc3"/><stop offset="0.7" stop-color="#cfaea3"/><stop offset="1" stop-color="#b99488"/></radialGradient>
<linearGradient id="mic" x1="0" y1="0" x2="1" y2="0"><stop offset="0" stop-color="#8f917f"/><stop offset="0.5" stop-color="#c3c4b4"/><stop offset="1" stop-color="#8d8f7e"/></linearGradient>
</defs>
<g filter="url(#wb)">
<rect x="-5" y="-5" width="140" height="110" fill="url(#wall)"/>
<polygon points="-5,-5 135,-5 128,2 113,22 -5,15" fill="url(#ceilw)"/>
<polygon points="113,22 130,-5 135,-5 135,105 113,105" fill="url(#rp)"/>
<line x1="112.5" y1="21" x2="112.5" y2="105" stroke="#8e8d89" stroke-width="1.6"/>
<line x1="113" y1="22" x2="128" y2="1" stroke="#8e8d89" stroke-width="1.4"/>
<ellipse cx="100" cy="56" rx="11" ry="6" fill="#eceae4"/>
<rect x="99" y="61" width="2" height="40" fill="#b7b3a9"/>
<path d="M2 105c4-13 14-21 32-24 16-3 34-2 50 2 14 4 24 11 28 22z" fill="#d2d8e0"/>
<path d="M40 100l6-20 14 4-4 16z" fill="#b8c3d0"/>
<path d="M62 84l10-2 8 14-12 4z" fill="#b8c3d0"/>
<path d="M34 44c0-17 10-28 26-28 16 0 26 11 26 28 0 19-8 32-25 32-17 0-27-13-27-32z" fill="url(#face)"/>
<ellipse cx="44" cy="58" rx="7" ry="6" fill="#c98f86" opacity="0.5"/>
<path d="M33 40C31 22 40 10 60 10C79 10 89 21 87 38C84 29 78 23 70 21C62 19 53 19 47 21C40 24 35 30 33 40z" fill="#6a635c"/>
<path d="M34 42c-2 6-1 13 2 17l2-1c-1-6-1-11-1-15z" fill="#7d726a"/>
<path d="M86 40c2 7 1 14-2 19l-2-1c1-6 1-11 1-15z" fill="#8a7f77"/>
<path d="M42 18c8-5 24-5 34 0" stroke="#8a857f" stroke-width="2" fill="none"/>
<ellipse cx="47" cy="43" rx="5" ry="1.8" fill="#8f6b60" opacity="0.7"/>
<ellipse cx="67" cy="43" rx="5" ry="1.8" fill="#8f6b60" opacity="0.7"/>
<ellipse cx="57" cy="50" rx="3.5" ry="6" fill="#e3c8bd" opacity="0.7"/>
<path d="M50 63c5-2 12-2 17 0-4 3-12 3-17 0z" fill="#7f3f3b"/>
<path d="M38 100l2-26h20l2 26z" fill="url(#mic)"/>
<ellipse cx="50" cy="74" rx="10" ry="7" fill="#8897ad"/>
<ellipse cx="50" cy="73" rx="7" ry="4.5" fill="#dfe5ec"/>
<ellipse cx="50" cy="74" rx="3" ry="2" fill="#8a99ae"/>
</g>
</svg>
</body></html>
